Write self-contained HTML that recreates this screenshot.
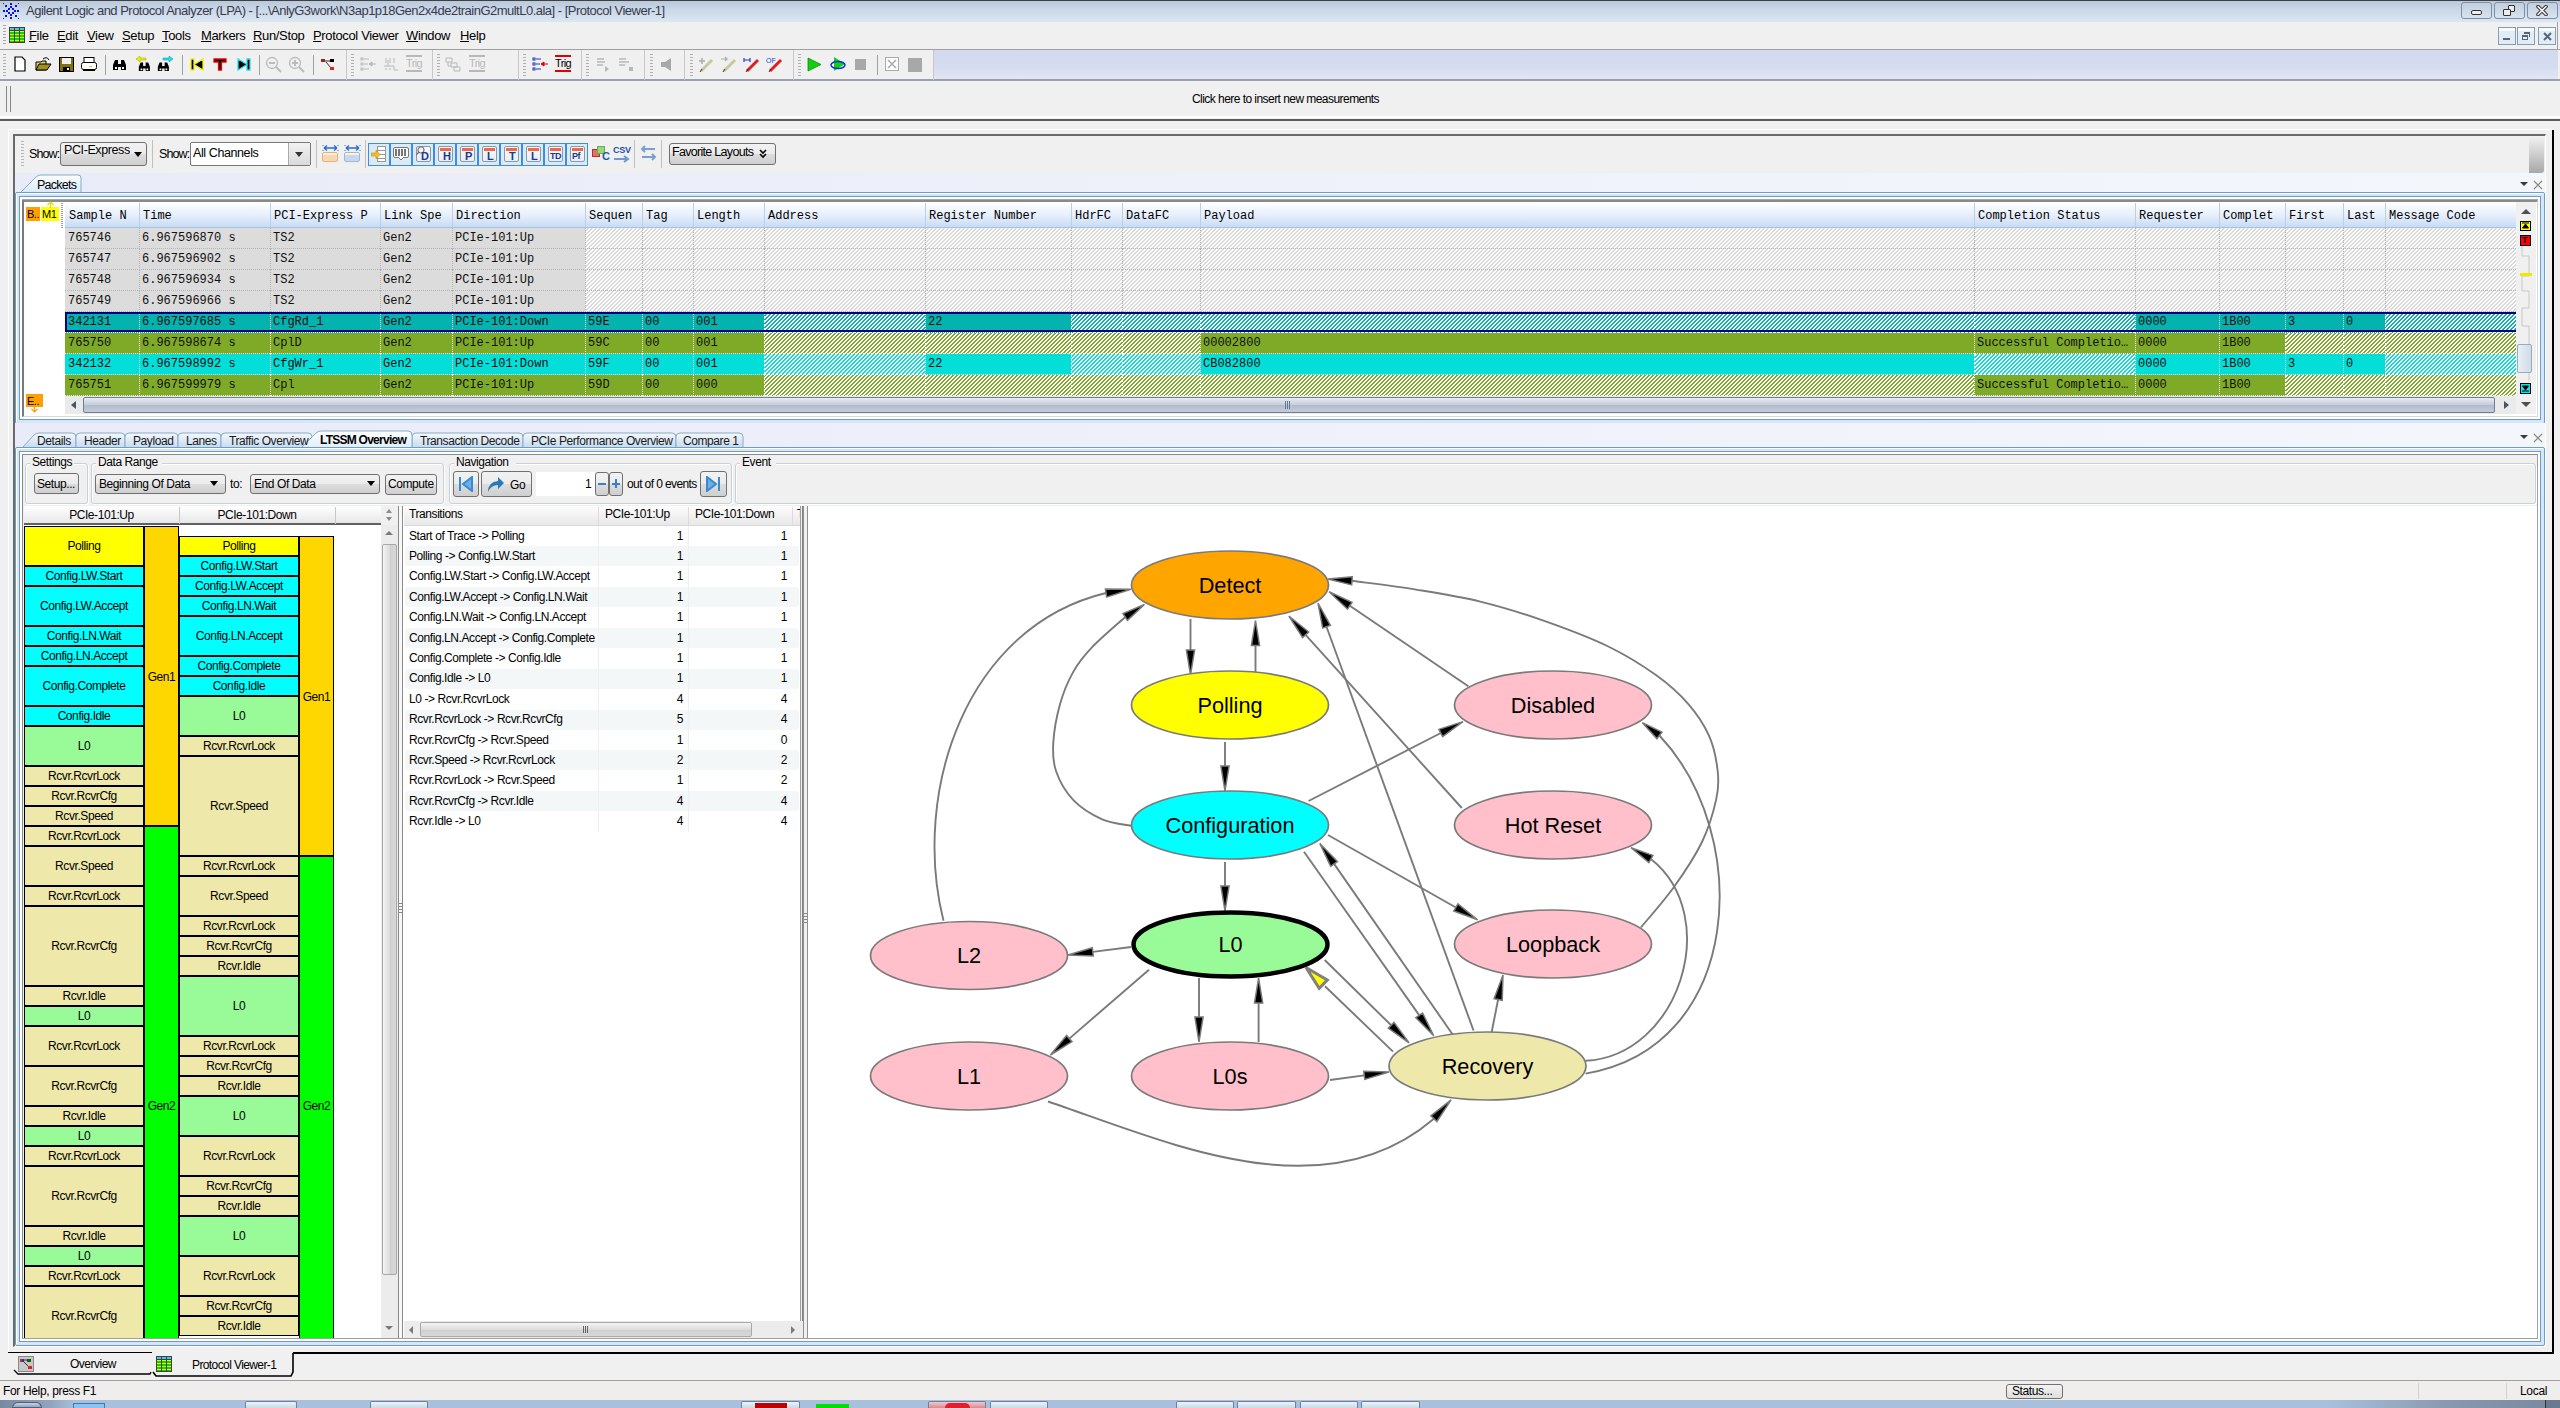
<!DOCTYPE html>
<html><head><meta charset="utf-8"><title>Agilent Logic and Protocol Analyzer</title><style>
html,body{margin:0;padding:0}
body{width:2560px;height:1408px;position:relative;overflow:hidden;background:#f0f0f0;font-family:"Liberation Sans",sans-serif;color:#000}
.t{position:absolute;white-space:nowrap;line-height:15px;font-family:"Liberation Sans",sans-serif}
</style></head>
<body>
<div style="position:absolute;left:0px;top:0px;width:2560px;height:22px;background:linear-gradient(#b9c9db,#c9d7e7 40%,#dbe6f2);border-top:1px solid #404040;box-sizing:border-box"></div>
<svg style="position:absolute;left:1px;top:1px" width="20" height="20"><g fill="#1010e0"><rect x="9" y="2" width="2" height="2"/><rect x="9" y="5" width="2" height="2"/><rect x="9" y="13" width="2" height="2"/><rect x="9" y="16" width="2" height="2"/><rect x="2" y="9" width="2" height="2"/><rect x="5" y="9" width="2" height="2"/><rect x="13" y="9" width="2" height="2"/><rect x="16" y="9" width="2" height="2"/><rect x="4" y="4" width="2" height="2"/><rect x="14" y="4" width="2" height="2"/><rect x="4" y="14" width="2" height="2"/><rect x="14" y="14" width="2" height="2"/><rect x="7" y="7" width="2" height="2"/><rect x="11" y="7" width="2" height="2"/><rect x="7" y="11" width="2" height="2"/><rect x="11" y="11" width="2" height="2"/><rect x="2" y="2" width="1" height="1"/><rect x="17" y="2" width="1" height="1"/><rect x="2" y="17" width="1" height="1"/><rect x="17" y="17" width="1" height="1"/></g></svg>
<div class="t" style="left:26px;top:3px;font-size:13px;letter-spacing:-0.51px;color:#3a3a4a">Agilent Logic and Protocol Analyzer (LPA) - [...\AnlyG3work\N3ap1p18Gen2x4de2trainG2multL0.ala] - [Protocol Viewer-1]</div>
<div style="position:absolute;left:2461px;top:2px;width:31px;height:17px;border:1px solid #7d8ea8;border-radius:3px;background:linear-gradient(#c2cfdd,#cfdbe8 60%,#d8e3ef);box-sizing:border-box"></div>
<div style="position:absolute;left:2494px;top:2px;width:31px;height:17px;border:1px solid #7d8ea8;border-radius:3px;background:linear-gradient(#c2cfdd,#cfdbe8 60%,#d8e3ef);box-sizing:border-box"></div>
<div style="position:absolute;left:2527px;top:2px;width:31px;height:17px;border:1px solid #7d8ea8;border-radius:3px;background:linear-gradient(#c2cfdd,#cfdbe8 60%,#d8e3ef);box-sizing:border-box"></div>
<div style="position:absolute;left:2471px;top:10px;width:11px;height:5px;border:1.5px solid #333;box-sizing:border-box;border-radius:2px;background:#eee"></div>
<div style="position:absolute;left:2508px;top:5px;width:7px;height:7px;border:1.5px solid #333;box-sizing:border-box;border-radius:1px;background:#eee"></div>
<div style="position:absolute;left:2503px;top:9px;width:8px;height:7px;border:1.5px solid #333;box-sizing:border-box;border-radius:1px;background:#eee"></div>
<svg style="position:absolute;left:2536px;top:5px" width="12" height="11"><path d="M2 1.5 L10 9.5 M10 1.5 L2 9.5" stroke="#333" stroke-width="3.6" stroke-linecap="round"/><path d="M2 1.5 L10 9.5 M10 1.5 L2 9.5" stroke="#f4f4f4" stroke-width="1.6" stroke-linecap="round"/></svg>
<div style="position:absolute;left:0px;top:22px;width:2560px;height:27px;background:#f0f0f0"></div>
<div style="position:absolute;left:3px;top:25px;width:3px;height:21px;background:repeating-linear-gradient(#a8a8a8 0 1px,transparent 1px 3px)"></div>
<div style="position:absolute;left:9px;top:27px;width:16px;height:16px;background:linear-gradient(90deg,transparent 0 4px,#404040 4px 5px,transparent 5px 9px,#404040 9px 10px,transparent 10px),linear-gradient(#40c8f0 0 2px,#404040 2px 3px,#f0f000 3px 4px,#10d010 4px 6px,#f0f000 6px 7px,#10d010 7px 9px,#f0f000 9px 10px,#10d010 10px 12px,#f0f000 12px 13px,#10d010 13px);border:1px solid #404040;box-sizing:border-box"></div>
<div class="t" style="left:29px;top:28px;font-size:13px;letter-spacing:-0.35px;color:#000"><u>F</u>ile</div>
<div class="t" style="left:57px;top:28px;font-size:13px;letter-spacing:-0.35px;color:#000"><u>E</u>dit</div>
<div class="t" style="left:87px;top:28px;font-size:13px;letter-spacing:-0.35px;color:#000"><u>V</u>iew</div>
<div class="t" style="left:122px;top:28px;font-size:13px;letter-spacing:-0.35px;color:#000"><u>S</u>etup</div>
<div class="t" style="left:162px;top:28px;font-size:13px;letter-spacing:-0.35px;color:#000"><u>T</u>ools</div>
<div class="t" style="left:201px;top:28px;font-size:13px;letter-spacing:-0.35px;color:#000"><u>M</u>arkers</div>
<div class="t" style="left:253px;top:28px;font-size:13px;letter-spacing:-0.35px;color:#000"><u>R</u>un/Stop</div>
<div class="t" style="left:313px;top:28px;font-size:13px;letter-spacing:-0.35px;color:#000"><u>P</u>rotocol Viewer</div>
<div class="t" style="left:406px;top:28px;font-size:13px;letter-spacing:-0.35px;color:#000"><u>W</u>indow</div>
<div class="t" style="left:460px;top:28px;font-size:13px;letter-spacing:-0.35px;color:#000"><u>H</u>elp</div>
<div style="position:absolute;left:2498px;top:27px;width:18px;height:18px;border:1px solid #8a9cb0;background:linear-gradient(#f8fbff 0 3px,#e0ecf8 3px);box-sizing:border-box"></div>
<div style="position:absolute;left:2517px;top:27px;width:18px;height:18px;border:1px solid #8a9cb0;background:linear-gradient(#f8fbff 0 3px,#e0ecf8 3px);box-sizing:border-box"></div>
<div style="position:absolute;left:2538px;top:27px;width:18px;height:18px;border:1px solid #8a9cb0;background:linear-gradient(#f8fbff 0 3px,#e0ecf8 3px);box-sizing:border-box"></div>
<div style="position:absolute;left:2503px;top:38px;width:7px;height:2px;background:#5a6470"></div>
<div style="position:absolute;left:2522px;top:35px;width:6px;height:5px;border:1px solid #5a6470;border-top-width:2px;box-sizing:border-box"></div>
<div style="position:absolute;left:2524px;top:32px;width:6px;height:5px;border-top:2px solid #5a6470;border-right:1px solid #5a6470;box-sizing:border-box"></div>
<svg style="position:absolute;left:2543px;top:32px" width="9" height="9"><path d="M1 1 L8 8 M8 1 L1 8" stroke="#5a6470" stroke-width="2"/></svg>
<div style="position:absolute;left:2557px;top:22px;width:1px;height:27px;background:#a0a0a0"></div>
<div style="position:absolute;left:0px;top:49px;width:2560px;height:32px;background:#f0f0f0;border-top:1px solid #a0a0a0;border-bottom:2px solid #9aa0a8;box-sizing:border-box"></div>
<div style="position:absolute;left:933px;top:50px;width:1625px;height:29px;background:linear-gradient(#d3d9ee,#d6dcf0 60%,#e2e6f4)"></div>
<div style="position:absolute;left:346px;top:50px;width:1px;height:30px;background:#c8c8c8"></div>
<div style="position:absolute;left:432px;top:50px;width:1px;height:30px;background:#c8c8c8"></div>
<div style="position:absolute;left:518px;top:50px;width:1px;height:30px;background:#c8c8c8"></div>
<div style="position:absolute;left:581px;top:50px;width:1px;height:30px;background:#c8c8c8"></div>
<div style="position:absolute;left:644px;top:50px;width:1px;height:30px;background:#c8c8c8"></div>
<div style="position:absolute;left:684px;top:50px;width:1px;height:30px;background:#c8c8c8"></div>
<div style="position:absolute;left:793px;top:50px;width:1px;height:30px;background:#c8c8c8"></div>
<div style="position:absolute;left:933px;top:50px;width:1px;height:30px;background:#c8c8c8"></div>
<div style="position:absolute;left:3px;top:54px;width:3px;height:22px;background:repeating-linear-gradient(#b0b0b0 0 1px,transparent 1px 3px)"></div>
<div style="position:absolute;left:351px;top:54px;width:3px;height:22px;background:repeating-linear-gradient(#b0b0b0 0 1px,transparent 1px 3px)"></div>
<div style="position:absolute;left:437px;top:54px;width:3px;height:22px;background:repeating-linear-gradient(#b0b0b0 0 1px,transparent 1px 3px)"></div>
<div style="position:absolute;left:523px;top:54px;width:3px;height:22px;background:repeating-linear-gradient(#b0b0b0 0 1px,transparent 1px 3px)"></div>
<div style="position:absolute;left:586px;top:54px;width:3px;height:22px;background:repeating-linear-gradient(#b0b0b0 0 1px,transparent 1px 3px)"></div>
<div style="position:absolute;left:650px;top:54px;width:3px;height:22px;background:repeating-linear-gradient(#b0b0b0 0 1px,transparent 1px 3px)"></div>
<div style="position:absolute;left:690px;top:54px;width:3px;height:22px;background:repeating-linear-gradient(#b0b0b0 0 1px,transparent 1px 3px)"></div>
<div style="position:absolute;left:798px;top:54px;width:3px;height:22px;background:repeating-linear-gradient(#b0b0b0 0 1px,transparent 1px 3px)"></div>
<div style="position:absolute;left:105px;top:55px;width:1px;height:20px;background:#a0a0a0"></div>
<div style="position:absolute;left:182px;top:55px;width:1px;height:20px;background:#a0a0a0"></div>
<div style="position:absolute;left:259px;top:55px;width:1px;height:20px;background:#a0a0a0"></div>
<div style="position:absolute;left:313px;top:55px;width:1px;height:20px;background:#a0a0a0"></div>
<div style="position:absolute;left:877px;top:55px;width:1px;height:20px;background:#a0a0a0"></div>
<svg style="position:absolute;left:14px;top:56px" width="12" height="16"><path d="M1 1 H8 L11 4 V15 H1 Z" fill="#fff" stroke="#000" stroke-width="1.2"/></svg>
<svg style="position:absolute;left:35px;top:56px" width="17" height="16"><path d="M1 6 H6 L7 5 H11 V14 H1 Z" fill="#e0d860" stroke="#000"/><path d="M1 14 L4 8 H16 L12 14 Z" fill="#a09020" stroke="#000"/><path d="M8 3 Q12 0 14 4" stroke="#000" fill="none"/></svg>
<svg style="position:absolute;left:59px;top:57px" width="15" height="15"><rect x="0.5" y="0.5" width="14" height="14" fill="#807010" stroke="#000"/><rect x="3" y="1" width="9" height="6" fill="#f0f0f0"/><rect x="4" y="10" width="7" height="4" fill="#000"/><rect x="8" y="11" width="2" height="2" fill="#f0f0f0"/></svg>
<svg style="position:absolute;left:81px;top:57px" width="17" height="15"><rect x="3" y="0.5" width="10" height="5" fill="#fff" stroke="#000"/><rect x="0.5" y="5.5" width="15" height="7" rx="2" fill="#fff" stroke="#000"/><rect x="2" y="12" width="12" height="2" fill="#000"/><rect x="8" y="9" width="3" height="1" fill="#e0d000"/></svg>
<svg style="position:absolute;left:112px;top:57px" width="16" height="15"><path d="M1 13 V8 L3 3 H6 V7 H9 V3 H12 L14 8 V13 H9 V10 H6 V13 Z" fill="#000"/><rect x="3" y="10" width="2" height="2" fill="#fff"/><rect x="10" y="10" width="2" height="2" fill="#fff"/></svg>
<svg style="position:absolute;left:135px;top:56px" width="17" height="17"><g transform="translate(3,4) scale(0.85)"><path d="M1 13 V8 L3 3 H6 V7 H9 V3 H12 L14 8 V13 H9 V10 H6 V13 Z" fill="#000"/><rect x="3" y="10" width="2" height="2" fill="#fff"/><rect x="10" y="10" width="2" height="2" fill="#fff"/></g><path d="M1 3 L5 0 V2 H11 V4 H5 V6 Z" fill="#f0f000" stroke="#a0a000" stroke-width="0.5"/></svg>
<svg style="position:absolute;left:157px;top:56px" width="17" height="17"><g transform="translate(0,4) scale(0.85)"><path d="M1 13 V8 L3 3 H6 V7 H9 V3 H12 L14 8 V13 H9 V10 H6 V13 Z" fill="#000"/><rect x="3" y="10" width="2" height="2" fill="#fff"/><rect x="10" y="10" width="2" height="2" fill="#fff"/></g><path d="M16 3 L12 0 V2 H6 V4 H12 V6 Z" fill="#20e0f0" stroke="#0090a0" stroke-width="0.5"/></svg>
<svg style="position:absolute;left:190px;top:58px" width="14" height="13"><path d="M1 1 H4 V12 H1 Z M4 6.5 L13 1 V12 Z" fill="#000" stroke="#f0f000" stroke-width="1.3"/></svg>
<svg style="position:absolute;left:213px;top:58px" width="14" height="13"><path d="M1 1 H13 V4 H8.5 V12 H5.5 V4 H1 Z" fill="#000" stroke="#f00000" stroke-width="1.3"/></svg>
<svg style="position:absolute;left:237px;top:58px" width="14" height="13"><path d="M13 1 H10 V12 H13 Z M10 6.5 L1 1 V12 Z" fill="#000" stroke="#20e0f0" stroke-width="1.3"/></svg>
<svg style="position:absolute;left:265px;top:56px" width="17" height="17"><circle cx="7" cy="7" r="5.5" fill="none" stroke="#bbb" stroke-width="1.3"/><path d="M4 7 H10" stroke="#bbb" stroke-width="2"/><path d="M11 11 L16 16" stroke="#bbb" stroke-width="2"/></svg>
<svg style="position:absolute;left:288px;top:56px" width="17" height="17"><circle cx="7" cy="7" r="5.5" fill="none" stroke="#bbb" stroke-width="1.3"/><path d="M4 7 H10" stroke="#bbb" stroke-width="2"/><path d="M7 4 V10" stroke="#bbb" stroke-width="2"/><path d="M11 11 L16 16" stroke="#bbb" stroke-width="2"/></svg>
<svg style="position:absolute;left:321px;top:58px" width="14" height="13"><path d="M3 3 L11 3 M5 4 L10 10" stroke="#333"/><rect x="0" y="1" width="4" height="3" fill="#a02020"/><rect x="9" y="1" width="4" height="3" fill="#000"/><rect x="9" y="9" width="4" height="3" fill="#e02020"/></svg>
<svg style="position:absolute;left:360px;top:57px" width="17" height="15"><g fill="none" stroke="#b8b8b8"><rect x="1" y="1" width="2" height="2"/><rect x="1" y="6" width="2" height="2"/><rect x="1" y="11" width="2" height="2"/><path d="M4 2 H9 M4 7 H8 M4 12 H9"/></g><path d="M9 7 H16 M9 7 L12 5 V9 Z" stroke="#b8b8b8" fill="#b8b8b8"/></svg>
<svg style="position:absolute;left:383px;top:57px" width="16" height="15"><path d="M1 9 H5 V3 M3 1 V6 M7 1 V6 M11 1 V6 M5 9 H11 V13 H15 M3 13 V11 M7 13 V11" stroke="#b8b8b8" fill="none"/></svg>
<div class="t" style="left:406px;top:58px;font-size:11px;color:#b8b8b8;letter-spacing:-0.6px;line-height:11px">Trig</div><div style="position:absolute;left:406px;top:55px;width:16px;height:2px;background:#b8b8b8"></div><div style="position:absolute;left:406px;top:70px;width:16px;height:2px;background:#b8b8b8"></div>
<svg style="position:absolute;left:445px;top:57px" width="16" height="15"><path d="M1 1 H7 V5 H1 Z M6 6 H12 V10 H6 Z M9 10 H15 V14 H9 Z M3 5 V9 H6" stroke="#b8b8b8" fill="none"/></svg>
<div class="t" style="left:469px;top:58px;font-size:11px;color:#b8b8b8;letter-spacing:-0.6px;line-height:11px">Trig</div><div style="position:absolute;left:469px;top:55px;width:16px;height:2px;background:#b8b8b8"></div><div style="position:absolute;left:469px;top:70px;width:16px;height:2px;background:#b8b8b8"></div>
<svg style="position:absolute;left:532px;top:57px" width="17" height="15"><g fill="none" stroke="#2030c0"><rect x="1" y="1" width="2" height="2"/><rect x="1" y="6" width="2" height="2"/><rect x="1" y="11" width="2" height="2"/><path d="M4 2 H9 M4 7 H8 M4 12 H9"/></g><path d="M9 7 H16 M9 7 L12 5 V9 Z" stroke="#e00000" fill="#e00000"/></svg>
<div class="t" style="left:555px;top:58px;font-size:11px;color:#000;letter-spacing:-0.6px;line-height:11px">Trig</div><div style="position:absolute;left:555px;top:55px;width:16px;height:2px;background:#e00000"></div><div style="position:absolute;left:555px;top:70px;width:16px;height:2px;background:#e00000"></div>
<svg style="position:absolute;left:596px;top:57px" width="14" height="15"><path d="M1 2 H8 M1 5 H9 M1 8 H7" stroke="#b8b8b8" stroke-width="1.5"/><path d="M9 9 L13 12 L9 15 Z" fill="#b8b8b8"/></svg>
<svg style="position:absolute;left:618px;top:57px" width="16" height="15"><path d="M1 2 H8 M1 5 H11 M1 8 H7" stroke="#b8b8b8" stroke-width="1.5"/><rect x="11" y="10" width="4" height="4" fill="#b8b8b8"/></svg>
<svg style="position:absolute;left:659px;top:57px" width="16" height="15"><path d="M2 5 H6 L12 1 V14 L6 10 H2 Z" fill="#a8a8a8"/></svg>
<svg style="position:absolute;left:697px;top:56px" width="18" height="17"><path d="M4 15 L15 4" stroke="#c8c8a0" stroke-width="3"/><path d="M3 16 L5 13" stroke="#333" stroke-width="1"/><path d="M2 5 H8 M5 2 V8" stroke="#aaa" stroke-width="1.5"/></svg>
<svg style="position:absolute;left:720px;top:56px" width="18" height="17"><path d="M4 15 L15 4" stroke="#c8c8a0" stroke-width="3"/><path d="M3 16 L5 13" stroke="#333" stroke-width="1"/><path d="M1 3 H7 L5 1 M7 3 L5 5" stroke="#aaa" stroke-width="1.2" fill="none"/></svg>
<svg style="position:absolute;left:743px;top:56px" width="18" height="17"><path d="M4 15 L15 4" stroke="#e02020" stroke-width="3"/><path d="M3 16 L5 13" stroke="#333" stroke-width="1"/><path d="M1 2 V6 M7 2 V6 M1 4 H7" stroke="#2040d0" stroke-width="1.2"/></svg>
<svg style="position:absolute;left:766px;top:56px" width="18" height="17"><path d="M4 15 L15 4" stroke="#e02020" stroke-width="3"/><path d="M3 16 L5 13" stroke="#333" stroke-width="1"/><text x="0" y="7" font-size="7" fill="#2040d0" font-family="Liberation Sans">OF</text></svg>
<svg style="position:absolute;left:807px;top:57px" width="16" height="15"><path d="M1 1 L14 7.5 L1 14 Z" fill="#10d010" stroke="#008000" stroke-width="0.7"/></svg>
<svg style="position:absolute;left:830px;top:56px" width="17" height="16"><path d="M4 1 L15 8 L4 15 Z" fill="#10d010"/><ellipse cx="8" cy="9" rx="7" ry="3.5" fill="none" stroke="#1030e0" stroke-width="1.5"/></svg>
<div style="position:absolute;left:855px;top:59px;width:11px;height:11px;background:#a8a8a8"></div>
<svg style="position:absolute;left:885px;top:57px" width="15" height="15"><rect x="0.5" y="0.5" width="13" height="13" fill="#fff" stroke="#aaa"/><path d="M3 3 L11 11 M11 3 L3 11" stroke="#aaa" stroke-width="1.5"/></svg>
<div style="position:absolute;left:908px;top:58px;width:14px;height:14px;background:#a8a8a8"></div>
<div style="position:absolute;left:0px;top:81px;width:2560px;height:35px;background:#f0f0f0"></div>
<div style="position:absolute;left:6px;top:86px;width:2px;height:26px;border-left:1px solid #888;border-right:1px solid #888;width:5px;box-sizing:border-box"></div>
<div class="t" style="left:1192px;top:92px;font-size:12px;letter-spacing:-0.55px;color:#000">Click here to insert new measurements</div>
<div style="position:absolute;left:0px;top:116px;width:2560px;height:2px;background:#fff"></div>
<div style="position:absolute;left:0px;top:119px;width:2560px;height:2px;background:#5a5a5a"></div>
<div style="position:absolute;left:8px;top:129px;width:2545px;height:1225px;background:#f0f0f0;border-top:1px solid #fff;border-left:1px solid #fff;box-sizing:border-box"></div>
<div style="position:absolute;left:2552px;top:130px;width:2px;height:1224px;background:#000"></div>
<div style="position:absolute;left:13px;top:134px;width:2533px;height:1213px;border-top:2px solid #6a6a6a;border-left:2px solid #6a6a6a;border-right:1px solid #fff;border-bottom:1px solid #fff;box-sizing:border-box"></div>
<div style="position:absolute;left:21px;top:141px;width:3px;height:26px;background:repeating-linear-gradient(#b8b8b8 0 1.5px,transparent 1.5px 3px)"></div>
<div style="position:absolute;left:60px;top:142px;width:87px;height:24px;border:1px solid #707070;border-radius:3px;background:linear-gradient(#f2f2f2,#ebebeb 50%,#dcdcdc 51%,#cfcfcf);box-sizing:border-box"></div>
<div class="t" style="left:64px;top:143px;font-size:12.5px;letter-spacing:-0.4px">PCI-Express</div>
<svg style="position:absolute;left:134px;top:152px" width="9" height="6"><path d="M0 0 H8 L4 5 Z" fill="#000"/></svg>
<div style="position:absolute;left:152px;top:140px;width:1px;height:28px;background:#c0c0c0"></div>
<div class="t" style="left:29px;top:147px;font-size:12.5px;letter-spacing:-0.9px">Show:</div>
<div class="t" style="left:159px;top:147px;font-size:12.5px;letter-spacing:-0.9px">Show:</div>
<div style="position:absolute;left:190px;top:142px;width:121px;height:24px;border:1px solid #7a7a7a;border-radius:2px;background:#fff;box-sizing:border-box"></div>
<div style="position:absolute;left:288px;top:143px;width:22px;height:22px;background:linear-gradient(#f2f2f2,#dadada);border-left:1px solid #aaa;box-sizing:border-box"></div>
<svg style="position:absolute;left:295px;top:152px" width="9" height="6"><path d="M0 0 H8 L4 5 Z" fill="#333"/></svg>
<div class="t" style="left:193px;top:146px;font-size:12.5px;letter-spacing:-0.4px">All Channels</div>
<div style="position:absolute;left:316px;top:140px;width:1px;height:28px;background:#c0c0c0"></div>
<div style="position:absolute;left:365px;top:140px;width:1px;height:28px;background:#c0c0c0"></div>
<div style="position:absolute;left:634px;top:140px;width:1px;height:28px;background:#c0c0c0"></div>
<div style="position:absolute;left:661px;top:140px;width:1px;height:28px;background:#c0c0c0"></div>
<div style="position:absolute;left:322px;top:152px;width:16px;height:10px;background:linear-gradient(#fff0e0 0 2px,#f8d8b0 2px);border:1px solid #e8b080;border-radius:2px;box-sizing:border-box"></div>
<svg style="position:absolute;left:322px;top:144px" width="17" height="8"><path d="M1 1 V2 M16 1 V2 M1 6 V7 M16 6 V7" stroke="#2a6ad0"/><path d="M2 4 H15 M2 4 L5 1.5 M2 4 L5 6.5 M15 4 L12 1.5 M15 4 L12 6.5" stroke="#2a6ad0" stroke-width="1.3" fill="none"/></svg>
<div style="position:absolute;left:344px;top:152px;width:16px;height:10px;background:linear-gradient(#fff0e0 0 2px,#c8d8f0 2px);border:1px solid #a0b8d8;border-radius:2px;box-sizing:border-box"></div>
<svg style="position:absolute;left:344px;top:144px" width="17" height="8"><path d="M1 1 V2 M16 1 V2 M1 6 V7 M16 6 V7" stroke="#2a6ad0"/><path d="M2 4 H15 M2 4 L5 1.5 M2 4 L5 6.5 M15 4 L12 1.5 M15 4 L12 6.5" stroke="#2a6ad0" stroke-width="1.3" fill="none"/></svg>
<div style="position:absolute;left:368px;top:143px;width:22px;height:23px;border:1px solid #3b8ee8;background:#dceaf8;box-sizing:border-box"></div>
<div style="position:absolute;left:377px;top:146px;width:9px;height:16px;background:repeating-linear-gradient(#fff 0 3px,#999 3px 4px);border:1px solid #999;box-sizing:border-box"></div>
<svg style="position:absolute;left:371px;top:150px" width="10" height="9"><path d="M0 3 H5 V0 L9 4.5 L5 9 V6 H0 Z" fill="#f0c020" stroke="#c09010" stroke-width="0.6"/></svg>
<div style="position:absolute;left:390px;top:143px;width:22px;height:23px;border:1px solid #3b8ee8;background:#dceaf8;box-sizing:border-box"></div>
<div style="position:absolute;left:393px;top:147px;width:16px;height:11px;background:#fafafa;border:1px solid #777;border-radius:2px;box-sizing:border-box"></div>
<div style="position:absolute;left:395px;top:149px;width:12px;height:7px;background:repeating-linear-gradient(90deg,#555 0 2px,transparent 2px 3px);opacity:0.8"></div>
<svg style="position:absolute;left:398px;top:157px" width="6" height="4"><path d="M0 0 L3 3 L6 0" fill="#fafafa" stroke="#777"/></svg>
<div style="position:absolute;left:412px;top:143px;width:22px;height:23px;border:1px solid #3b8ee8;background:#dceaf8;box-sizing:border-box"></div>
<div style="position:absolute;left:416px;top:146px;width:15px;height:16px;border:1px solid #8a9aa8;border-radius:2px;background:linear-gradient(#fafafa,#e8eef4);box-sizing:border-box"></div>
<svg style="position:absolute;left:416px;top:146px" width="10" height="10"><circle cx="5" cy="4" r="3" fill="none" stroke="#777" stroke-width="1.2"/><path d="M3 6 L0 9" stroke="#777" stroke-width="1.5"/></svg>
<div class="t" style="left:421px;top:151px;font-size:11px;font-weight:bold;color:#1a3a90;line-height:11px;letter-spacing:-0.6px">D</div>
<div style="position:absolute;left:434px;top:143px;width:22px;height:23px;border:1px solid #3b8ee8;background:#dceaf8;box-sizing:border-box"></div>
<div style="position:absolute;left:438px;top:146px;width:15px;height:16px;border:1px solid #8a9aa8;border-radius:2px;background:linear-gradient(#fafafa,#e8eef4);box-sizing:border-box"></div>
<div style="position:absolute;left:440px;top:148px;width:11px;height:3px;background:#f06848"></div>
<div class="t" style="left:443px;top:151px;font-size:11px;font-weight:bold;color:#1a3a90;line-height:11px;letter-spacing:-0.6px">H</div>
<div style="position:absolute;left:456px;top:143px;width:22px;height:23px;border:1px solid #3b8ee8;background:#dceaf8;box-sizing:border-box"></div>
<div style="position:absolute;left:460px;top:146px;width:15px;height:16px;border:1px solid #8a9aa8;border-radius:2px;background:linear-gradient(#fafafa,#e8eef4);box-sizing:border-box"></div>
<div style="position:absolute;left:462px;top:148px;width:11px;height:3px;background:#f06848"></div>
<div class="t" style="left:465px;top:151px;font-size:11px;font-weight:bold;color:#1a3a90;line-height:11px;letter-spacing:-0.6px">P</div>
<div style="position:absolute;left:478px;top:143px;width:22px;height:23px;border:1px solid #3b8ee8;background:#dceaf8;box-sizing:border-box"></div>
<div style="position:absolute;left:482px;top:146px;width:15px;height:16px;border:1px solid #8a9aa8;border-radius:2px;background:linear-gradient(#fafafa,#e8eef4);box-sizing:border-box"></div>
<div style="position:absolute;left:484px;top:148px;width:11px;height:3px;background:#f06848"></div>
<div class="t" style="left:487px;top:151px;font-size:11px;font-weight:bold;color:#1a3a90;line-height:11px;letter-spacing:-0.6px">L</div>
<div style="position:absolute;left:500px;top:143px;width:22px;height:23px;border:1px solid #3b8ee8;background:#dceaf8;box-sizing:border-box"></div>
<div style="position:absolute;left:504px;top:146px;width:15px;height:16px;border:1px solid #8a9aa8;border-radius:2px;background:linear-gradient(#fafafa,#e8eef4);box-sizing:border-box"></div>
<div style="position:absolute;left:506px;top:148px;width:11px;height:3px;background:#f06848"></div>
<div class="t" style="left:509px;top:151px;font-size:11px;font-weight:bold;color:#1a3a90;line-height:11px;letter-spacing:-0.6px">T</div>
<div style="position:absolute;left:522px;top:143px;width:22px;height:23px;border:1px solid #3b8ee8;background:#dceaf8;box-sizing:border-box"></div>
<div style="position:absolute;left:526px;top:146px;width:15px;height:16px;border:1px solid #8a9aa8;border-radius:2px;background:linear-gradient(#fafafa,#e8eef4);box-sizing:border-box"></div>
<div style="position:absolute;left:528px;top:148px;width:11px;height:3px;background:#f06848"></div>
<div class="t" style="left:531px;top:151px;font-size:11px;font-weight:bold;color:#1a3a90;line-height:11px;letter-spacing:-0.6px">L</div>
<div style="position:absolute;left:544px;top:143px;width:22px;height:23px;border:1px solid #3b8ee8;background:#dceaf8;box-sizing:border-box"></div>
<div style="position:absolute;left:548px;top:146px;width:15px;height:16px;border:1px solid #8a9aa8;border-radius:2px;background:linear-gradient(#fafafa,#e8eef4);box-sizing:border-box"></div>
<div style="position:absolute;left:550px;top:148px;width:11px;height:3px;background:#f06848"></div>
<div class="t" style="left:550px;top:151px;font-size:9px;font-weight:bold;color:#1a3a90;line-height:11px;letter-spacing:-0.6px">TD</div>
<div style="position:absolute;left:566px;top:143px;width:22px;height:23px;border:1px solid #3b8ee8;background:#dceaf8;box-sizing:border-box"></div>
<div style="position:absolute;left:570px;top:146px;width:15px;height:16px;border:1px solid #8a9aa8;border-radius:2px;background:linear-gradient(#fafafa,#e8eef4);box-sizing:border-box"></div>
<div style="position:absolute;left:572px;top:148px;width:11px;height:3px;background:#f06848"></div>
<div class="t" style="left:572px;top:151px;font-size:9px;font-weight:bold;color:#1a3a90;line-height:11px;letter-spacing:-0.6px">Pf</div>
<div style="position:absolute;left:592px;top:149px;width:8px;height:8px;background:#e87060;border:1px solid #a33;box-sizing:border-box"></div>
<div style="position:absolute;left:597px;top:146px;width:8px;height:8px;background:#9ad870;border:1px solid #6a6;box-sizing:border-box"></div>
<div class="t" style="left:602px;top:151px;font-size:11px;font-weight:bold;color:#1a5ab0;line-height:11px">C</div>
<div class="t" style="left:613px;top:145px;font-size:9px;font-weight:bold;color:#2050b0;line-height:10px;letter-spacing:-0.3px">CSV</div>
<svg style="position:absolute;left:613px;top:155px" width="18" height="8"><path d="M1 4 H15 M11 1 L15 4 L11 7" stroke="#6a9ad0" stroke-width="2" fill="none"/></svg>
<svg style="position:absolute;left:640px;top:145px" width="17" height="17"><path d="M15 4 H2 M5 1 L2 4 L5 7 M2 12 H15 M12 9 L15 12 L12 15" stroke="#7aa0d0" stroke-width="2" fill="none"/></svg>
<div style="position:absolute;left:669px;top:143px;width:107px;height:22px;border:1px solid #707070;border-radius:3px;background:linear-gradient(#f2f2f2,#ebebeb 50%,#dcdcdc 51%,#cfcfcf);box-sizing:border-box"></div>
<div class="t" style="left:672px;top:145px;font-size:12.5px;letter-spacing:-0.7px">Favorite Layouts</div>
<svg style="position:absolute;left:759px;top:149px" width="9" height="11"><path d="M1 1 L4 4 L7 1 M1 5 L4 8 L7 5" stroke="#000" stroke-width="1.6" fill="none"/></svg>
<div style="position:absolute;left:2529px;top:137px;width:15px;height:36px;background:linear-gradient(#f0f0f0,#a8a8a8);border-radius:0 0 3px 0"></div>
<div style="position:absolute;left:15px;top:173px;width:2530px;height:20px;background:linear-gradient(90deg,#e9ecf8,#f3f6fb)"></div>
<svg style="position:absolute;left:19px;top:174px" width="64" height="20"><path d="M1 19 L17 3 Q19 1 22 1 H59 Q62 1 62 4 V19" fill="url(#tabg)" stroke="#86abc9"/><defs><linearGradient id="tabg" x1="0" y1="0" x2="0" y2="1"><stop offset="0" stop-color="#fdfeff"/><stop offset="1" stop-color="#d8e8f8"/></linearGradient></defs></svg>
<div class="t" style="left:37px;top:178px;font-size:12.5px;letter-spacing:-0.75px">Packets</div>
<svg style="position:absolute;left:2519px;top:180px" width="26" height="10"><path d="M1 2 H9 L5 6 Z" fill="#333c44"/><path d="M15 1 L23 9 M23 1 L15 9" stroke="#8a8a80" stroke-width="1.2"/></svg>
<div style="position:absolute;left:15px;top:192px;width:2530px;height:232px;border:1px solid #6a9ec2;border-radius:2px;background:#d6e6f8;box-shadow:inset 1px 1px 0 #fff;box-sizing:border-box"></div>
<div style="position:absolute;left:19px;top:196px;width:2522px;height:224px;border:1px solid #6a9ec2;background:#fff;box-sizing:border-box"></div>
<div style="position:absolute;left:22px;top:199px;width:2516px;height:218px;border-top:3px solid #8a8a8a;border-left:2px solid #7a7a7a;border-right:1px solid #d8d8d8;border-bottom:1px solid #d8d8d8;box-sizing:border-box;background:#fff"></div>
<div style="position:absolute;left:22px;top:199px;width:2516px;height:1px;background:#a8a8a8"></div>
<div style="position:absolute;left:24px;top:202px;width:41px;height:212px;background:#fff"></div>
<div style="position:absolute;left:26px;top:207px;width:14px;height:14px;background:#ffa000"></div>
<div class="t" style="left:27px;top:208px;font-size:11px;line-height:12px;letter-spacing:-0.5px">B..</div>
<div style="position:absolute;left:41px;top:207px;width:18px;height:14px;background:#ffff00"></div>
<div class="t" style="left:42px;top:208px;font-size:11px;line-height:12px;letter-spacing:-0.5px">M1</div>
<svg style="position:absolute;left:46px;top:201px" width="9" height="7"><path d="M4.5 1 V7 M1.5 4 L4.5 1 L7.5 4" stroke="#e8d800" stroke-width="1.2" fill="none"/></svg>
<div style="position:absolute;left:61px;top:203px;width:2px;height:25px;background:repeating-linear-gradient(#a0a0a0 0 1px,transparent 1px 2px)"></div>
<div style="position:absolute;left:26px;top:394px;width:17px;height:13px;background:#ffa000"></div>
<div class="t" style="left:27px;top:395px;font-size:11px;line-height:12px;letter-spacing:-0.5px">E..</div>
<svg style="position:absolute;left:30px;top:406px" width="9" height="8"><path d="M4.5 0 V6 M1.5 3 L4.5 6 L7.5 3" stroke="#ffa000" stroke-width="1.2" fill="none"/></svg>
<div style="position:absolute;left:65px;top:202px;width:2451px;height:26px;background:linear-gradient(#ffffff,#e8f0fb 50%,#c8dcf6);border-bottom:1px solid #a8c4e4;box-sizing:border-box"></div>
<div class="t" style="left:69px;top:209px;font-family:'Liberation Mono',monospace;font-size:12px;letter-spacing:0px">Sample N</div>
<div style="position:absolute;left:139px;top:203px;width:1px;height:24px;background:#b8d0ea"></div>
<div class="t" style="left:143px;top:209px;font-family:'Liberation Mono',monospace;font-size:12px;letter-spacing:0px">Time</div>
<div style="position:absolute;left:270px;top:203px;width:1px;height:24px;background:#b8d0ea"></div>
<div class="t" style="left:274px;top:209px;font-family:'Liberation Mono',monospace;font-size:12px;letter-spacing:0px">PCI-Express P</div>
<div style="position:absolute;left:380px;top:203px;width:1px;height:24px;background:#b8d0ea"></div>
<div class="t" style="left:384px;top:209px;font-family:'Liberation Mono',monospace;font-size:12px;letter-spacing:0px">Link Spe</div>
<div style="position:absolute;left:452px;top:203px;width:1px;height:24px;background:#b8d0ea"></div>
<div class="t" style="left:456px;top:209px;font-family:'Liberation Mono',monospace;font-size:12px;letter-spacing:0px">Direction</div>
<div style="position:absolute;left:585px;top:203px;width:1px;height:24px;background:#b8d0ea"></div>
<div class="t" style="left:589px;top:209px;font-family:'Liberation Mono',monospace;font-size:12px;letter-spacing:0px">Sequen</div>
<div style="position:absolute;left:642px;top:203px;width:1px;height:24px;background:#b8d0ea"></div>
<div class="t" style="left:646px;top:209px;font-family:'Liberation Mono',monospace;font-size:12px;letter-spacing:0px">Tag</div>
<div style="position:absolute;left:693px;top:203px;width:1px;height:24px;background:#b8d0ea"></div>
<div class="t" style="left:697px;top:209px;font-family:'Liberation Mono',monospace;font-size:12px;letter-spacing:0px">Length</div>
<div style="position:absolute;left:764px;top:203px;width:1px;height:24px;background:#b8d0ea"></div>
<div class="t" style="left:768px;top:209px;font-family:'Liberation Mono',monospace;font-size:12px;letter-spacing:0px">Address</div>
<div style="position:absolute;left:925px;top:203px;width:1px;height:24px;background:#b8d0ea"></div>
<div class="t" style="left:929px;top:209px;font-family:'Liberation Mono',monospace;font-size:12px;letter-spacing:0px">Register Number</div>
<div style="position:absolute;left:1071px;top:203px;width:1px;height:24px;background:#b8d0ea"></div>
<div class="t" style="left:1075px;top:209px;font-family:'Liberation Mono',monospace;font-size:12px;letter-spacing:0px">HdrFC</div>
<div style="position:absolute;left:1122px;top:203px;width:1px;height:24px;background:#b8d0ea"></div>
<div class="t" style="left:1126px;top:209px;font-family:'Liberation Mono',monospace;font-size:12px;letter-spacing:0px">DataFC</div>
<div style="position:absolute;left:1200px;top:203px;width:1px;height:24px;background:#b8d0ea"></div>
<div class="t" style="left:1204px;top:209px;font-family:'Liberation Mono',monospace;font-size:12px;letter-spacing:0px">Payload</div>
<div style="position:absolute;left:1974px;top:203px;width:1px;height:24px;background:#b8d0ea"></div>
<div class="t" style="left:1978px;top:209px;font-family:'Liberation Mono',monospace;font-size:12px;letter-spacing:0px">Completion Status</div>
<div style="position:absolute;left:2135px;top:203px;width:1px;height:24px;background:#b8d0ea"></div>
<div class="t" style="left:2139px;top:209px;font-family:'Liberation Mono',monospace;font-size:12px;letter-spacing:0px">Requester</div>
<div style="position:absolute;left:2219px;top:203px;width:1px;height:24px;background:#b8d0ea"></div>
<div class="t" style="left:2223px;top:209px;font-family:'Liberation Mono',monospace;font-size:12px;letter-spacing:0px">Complet</div>
<div style="position:absolute;left:2285px;top:203px;width:1px;height:24px;background:#b8d0ea"></div>
<div class="t" style="left:2289px;top:209px;font-family:'Liberation Mono',monospace;font-size:12px;letter-spacing:0px">First</div>
<div style="position:absolute;left:2343px;top:203px;width:1px;height:24px;background:#b8d0ea"></div>
<div class="t" style="left:2347px;top:209px;font-family:'Liberation Mono',monospace;font-size:12px;letter-spacing:0px">Last</div>
<div style="position:absolute;left:2385px;top:203px;width:1px;height:24px;background:#b8d0ea"></div>
<div class="t" style="left:2389px;top:209px;font-family:'Liberation Mono',monospace;font-size:12px;letter-spacing:0px">Message Code</div>
<div style="position:absolute;left:2516px;top:202px;width:1px;height:26px;background:#b8d0ea"></div>
<div style="position:absolute;left:65px;top:228px;width:74px;height:21px;background:#dcdcdc"></div>
<div style="position:absolute;left:139px;top:228px;width:131px;height:21px;background:#dcdcdc"></div>
<div style="position:absolute;left:270px;top:228px;width:110px;height:21px;background:#dcdcdc"></div>
<div style="position:absolute;left:380px;top:228px;width:72px;height:21px;background:#dcdcdc"></div>
<div style="position:absolute;left:452px;top:228px;width:133px;height:21px;background:#dcdcdc"></div>
<div style="position:absolute;left:65px;top:249px;width:74px;height:21px;background:#dcdcdc"></div>
<div style="position:absolute;left:139px;top:249px;width:131px;height:21px;background:#dcdcdc"></div>
<div style="position:absolute;left:270px;top:249px;width:110px;height:21px;background:#dcdcdc"></div>
<div style="position:absolute;left:380px;top:249px;width:72px;height:21px;background:#dcdcdc"></div>
<div style="position:absolute;left:452px;top:249px;width:133px;height:21px;background:#dcdcdc"></div>
<div style="position:absolute;left:65px;top:270px;width:74px;height:21px;background:#dcdcdc"></div>
<div style="position:absolute;left:139px;top:270px;width:131px;height:21px;background:#dcdcdc"></div>
<div style="position:absolute;left:270px;top:270px;width:110px;height:21px;background:#dcdcdc"></div>
<div style="position:absolute;left:380px;top:270px;width:72px;height:21px;background:#dcdcdc"></div>
<div style="position:absolute;left:452px;top:270px;width:133px;height:21px;background:#dcdcdc"></div>
<div style="position:absolute;left:65px;top:291px;width:74px;height:21px;background:#dcdcdc"></div>
<div style="position:absolute;left:139px;top:291px;width:131px;height:21px;background:#dcdcdc"></div>
<div style="position:absolute;left:270px;top:291px;width:110px;height:21px;background:#dcdcdc"></div>
<div style="position:absolute;left:380px;top:291px;width:72px;height:21px;background:#dcdcdc"></div>
<div style="position:absolute;left:452px;top:291px;width:133px;height:21px;background:#dcdcdc"></div>
<div style="position:absolute;left:65px;top:312px;width:74px;height:21px;background:#04b2ae"></div>
<div style="position:absolute;left:139px;top:312px;width:131px;height:21px;background:#04b2ae"></div>
<div style="position:absolute;left:270px;top:312px;width:110px;height:21px;background:#04b2ae"></div>
<div style="position:absolute;left:380px;top:312px;width:72px;height:21px;background:#04b2ae"></div>
<div style="position:absolute;left:452px;top:312px;width:133px;height:21px;background:#04b2ae"></div>
<div style="position:absolute;left:585px;top:312px;width:57px;height:21px;background:#04b2ae"></div>
<div style="position:absolute;left:642px;top:312px;width:51px;height:21px;background:#04b2ae"></div>
<div style="position:absolute;left:693px;top:312px;width:71px;height:21px;background:#04b2ae"></div>
<div style="position:absolute;left:925px;top:312px;width:146px;height:21px;background:#04b2ae"></div>
<div style="position:absolute;left:2135px;top:312px;width:84px;height:21px;background:#04b2ae"></div>
<div style="position:absolute;left:2219px;top:312px;width:66px;height:21px;background:#04b2ae"></div>
<div style="position:absolute;left:2285px;top:312px;width:58px;height:21px;background:#04b2ae"></div>
<div style="position:absolute;left:2343px;top:312px;width:42px;height:21px;background:#04b2ae"></div>
<div style="position:absolute;left:65px;top:333px;width:74px;height:21px;background:#7eaa28"></div>
<div style="position:absolute;left:139px;top:333px;width:131px;height:21px;background:#7eaa28"></div>
<div style="position:absolute;left:270px;top:333px;width:110px;height:21px;background:#7eaa28"></div>
<div style="position:absolute;left:380px;top:333px;width:72px;height:21px;background:#7eaa28"></div>
<div style="position:absolute;left:452px;top:333px;width:133px;height:21px;background:#7eaa28"></div>
<div style="position:absolute;left:585px;top:333px;width:57px;height:21px;background:#7eaa28"></div>
<div style="position:absolute;left:642px;top:333px;width:51px;height:21px;background:#7eaa28"></div>
<div style="position:absolute;left:693px;top:333px;width:71px;height:21px;background:#7eaa28"></div>
<div style="position:absolute;left:1200px;top:333px;width:774px;height:21px;background:#7eaa28"></div>
<div style="position:absolute;left:1974px;top:333px;width:161px;height:21px;background:#7eaa28"></div>
<div style="position:absolute;left:2135px;top:333px;width:84px;height:21px;background:#7eaa28"></div>
<div style="position:absolute;left:2219px;top:333px;width:66px;height:21px;background:#7eaa28"></div>
<div style="position:absolute;left:65px;top:354px;width:74px;height:21px;background:#04ded8"></div>
<div style="position:absolute;left:139px;top:354px;width:131px;height:21px;background:#04ded8"></div>
<div style="position:absolute;left:270px;top:354px;width:110px;height:21px;background:#04ded8"></div>
<div style="position:absolute;left:380px;top:354px;width:72px;height:21px;background:#04ded8"></div>
<div style="position:absolute;left:452px;top:354px;width:133px;height:21px;background:#04ded8"></div>
<div style="position:absolute;left:585px;top:354px;width:57px;height:21px;background:#04ded8"></div>
<div style="position:absolute;left:642px;top:354px;width:51px;height:21px;background:#04ded8"></div>
<div style="position:absolute;left:693px;top:354px;width:71px;height:21px;background:#04ded8"></div>
<div style="position:absolute;left:925px;top:354px;width:146px;height:21px;background:#04ded8"></div>
<div style="position:absolute;left:1200px;top:354px;width:774px;height:21px;background:#04ded8"></div>
<div style="position:absolute;left:2135px;top:354px;width:84px;height:21px;background:#04ded8"></div>
<div style="position:absolute;left:2219px;top:354px;width:66px;height:21px;background:#04ded8"></div>
<div style="position:absolute;left:2285px;top:354px;width:58px;height:21px;background:#04ded8"></div>
<div style="position:absolute;left:2343px;top:354px;width:42px;height:21px;background:#04ded8"></div>
<div style="position:absolute;left:65px;top:375px;width:74px;height:21px;background:#7eaa28"></div>
<div style="position:absolute;left:139px;top:375px;width:131px;height:21px;background:#7eaa28"></div>
<div style="position:absolute;left:270px;top:375px;width:110px;height:21px;background:#7eaa28"></div>
<div style="position:absolute;left:380px;top:375px;width:72px;height:21px;background:#7eaa28"></div>
<div style="position:absolute;left:452px;top:375px;width:133px;height:21px;background:#7eaa28"></div>
<div style="position:absolute;left:585px;top:375px;width:57px;height:21px;background:#7eaa28"></div>
<div style="position:absolute;left:642px;top:375px;width:51px;height:21px;background:#7eaa28"></div>
<div style="position:absolute;left:693px;top:375px;width:71px;height:21px;background:#7eaa28"></div>
<div style="position:absolute;left:1974px;top:375px;width:161px;height:21px;background:#7eaa28"></div>
<div style="position:absolute;left:2135px;top:375px;width:84px;height:21px;background:#7eaa28"></div>
<div style="position:absolute;left:2219px;top:375px;width:66px;height:21px;background:#7eaa28"></div>
<svg style="position:absolute;left:0;top:0" width="2560" height="420" shape-rendering="crispEdges"><defs><pattern id="hgray" width="4" height="4" patternUnits="userSpaceOnUse"><rect width="4" height="4" fill="#ffffff"/><rect x="3" y="0" width="1" height="1" fill="#d9d9d9"/><rect x="0" y="0" width="1" height="1" fill="#d9d9d9"/><rect x="2" y="1" width="1" height="1" fill="#d9d9d9"/><rect x="3" y="1" width="1" height="1" fill="#d9d9d9"/><rect x="1" y="2" width="1" height="1" fill="#d9d9d9"/><rect x="2" y="2" width="1" height="1" fill="#d9d9d9"/><rect x="0" y="3" width="1" height="1" fill="#d9d9d9"/><rect x="1" y="3" width="1" height="1" fill="#d9d9d9"/></pattern><pattern id="hteal" width="4" height="4" patternUnits="userSpaceOnUse"><rect width="4" height="4" fill="#ffffff"/><rect x="3" y="0" width="1" height="1" fill="#04b2ae"/><rect x="0" y="0" width="1" height="1" fill="#04b2ae"/><rect x="2" y="1" width="1" height="1" fill="#04b2ae"/><rect x="3" y="1" width="1" height="1" fill="#04b2ae"/><rect x="1" y="2" width="1" height="1" fill="#04b2ae"/><rect x="2" y="2" width="1" height="1" fill="#04b2ae"/><rect x="0" y="3" width="1" height="1" fill="#04b2ae"/><rect x="1" y="3" width="1" height="1" fill="#04b2ae"/></pattern><pattern id="holive" width="4" height="4" patternUnits="userSpaceOnUse"><rect width="4" height="4" fill="#ffffff"/><rect x="3" y="0" width="1" height="1" fill="#7eaa28"/><rect x="0" y="0" width="1" height="1" fill="#7eaa28"/><rect x="2" y="1" width="1" height="1" fill="#7eaa28"/><rect x="3" y="1" width="1" height="1" fill="#7eaa28"/><rect x="1" y="2" width="1" height="1" fill="#7eaa28"/><rect x="2" y="2" width="1" height="1" fill="#7eaa28"/><rect x="0" y="3" width="1" height="1" fill="#7eaa28"/><rect x="1" y="3" width="1" height="1" fill="#7eaa28"/></pattern><pattern id="hcyan" width="4" height="4" patternUnits="userSpaceOnUse"><rect width="4" height="4" fill="#ffffff"/><rect x="3" y="0" width="1" height="1" fill="#04ded8"/><rect x="0" y="0" width="1" height="1" fill="#04ded8"/><rect x="2" y="1" width="1" height="1" fill="#04ded8"/><rect x="3" y="1" width="1" height="1" fill="#04ded8"/><rect x="1" y="2" width="1" height="1" fill="#04ded8"/><rect x="2" y="2" width="1" height="1" fill="#04ded8"/><rect x="0" y="3" width="1" height="1" fill="#04ded8"/><rect x="1" y="3" width="1" height="1" fill="#04ded8"/></pattern></defs><rect x="585" y="228" width="57" height="21" fill="url(#hgray)"/><rect x="642" y="228" width="51" height="21" fill="url(#hgray)"/><rect x="693" y="228" width="71" height="21" fill="url(#hgray)"/><rect x="764" y="228" width="161" height="21" fill="url(#hgray)"/><rect x="925" y="228" width="146" height="21" fill="url(#hgray)"/><rect x="1071" y="228" width="51" height="21" fill="url(#hgray)"/><rect x="1122" y="228" width="78" height="21" fill="url(#hgray)"/><rect x="1200" y="228" width="774" height="21" fill="url(#hgray)"/><rect x="1974" y="228" width="161" height="21" fill="url(#hgray)"/><rect x="2135" y="228" width="84" height="21" fill="url(#hgray)"/><rect x="2219" y="228" width="66" height="21" fill="url(#hgray)"/><rect x="2285" y="228" width="58" height="21" fill="url(#hgray)"/><rect x="2343" y="228" width="42" height="21" fill="url(#hgray)"/><rect x="2385" y="228" width="131" height="21" fill="url(#hgray)"/><rect x="585" y="249" width="57" height="21" fill="url(#hgray)"/><rect x="642" y="249" width="51" height="21" fill="url(#hgray)"/><rect x="693" y="249" width="71" height="21" fill="url(#hgray)"/><rect x="764" y="249" width="161" height="21" fill="url(#hgray)"/><rect x="925" y="249" width="146" height="21" fill="url(#hgray)"/><rect x="1071" y="249" width="51" height="21" fill="url(#hgray)"/><rect x="1122" y="249" width="78" height="21" fill="url(#hgray)"/><rect x="1200" y="249" width="774" height="21" fill="url(#hgray)"/><rect x="1974" y="249" width="161" height="21" fill="url(#hgray)"/><rect x="2135" y="249" width="84" height="21" fill="url(#hgray)"/><rect x="2219" y="249" width="66" height="21" fill="url(#hgray)"/><rect x="2285" y="249" width="58" height="21" fill="url(#hgray)"/><rect x="2343" y="249" width="42" height="21" fill="url(#hgray)"/><rect x="2385" y="249" width="131" height="21" fill="url(#hgray)"/><rect x="585" y="270" width="57" height="21" fill="url(#hgray)"/><rect x="642" y="270" width="51" height="21" fill="url(#hgray)"/><rect x="693" y="270" width="71" height="21" fill="url(#hgray)"/><rect x="764" y="270" width="161" height="21" fill="url(#hgray)"/><rect x="925" y="270" width="146" height="21" fill="url(#hgray)"/><rect x="1071" y="270" width="51" height="21" fill="url(#hgray)"/><rect x="1122" y="270" width="78" height="21" fill="url(#hgray)"/><rect x="1200" y="270" width="774" height="21" fill="url(#hgray)"/><rect x="1974" y="270" width="161" height="21" fill="url(#hgray)"/><rect x="2135" y="270" width="84" height="21" fill="url(#hgray)"/><rect x="2219" y="270" width="66" height="21" fill="url(#hgray)"/><rect x="2285" y="270" width="58" height="21" fill="url(#hgray)"/><rect x="2343" y="270" width="42" height="21" fill="url(#hgray)"/><rect x="2385" y="270" width="131" height="21" fill="url(#hgray)"/><rect x="585" y="291" width="57" height="21" fill="url(#hgray)"/><rect x="642" y="291" width="51" height="21" fill="url(#hgray)"/><rect x="693" y="291" width="71" height="21" fill="url(#hgray)"/><rect x="764" y="291" width="161" height="21" fill="url(#hgray)"/><rect x="925" y="291" width="146" height="21" fill="url(#hgray)"/><rect x="1071" y="291" width="51" height="21" fill="url(#hgray)"/><rect x="1122" y="291" width="78" height="21" fill="url(#hgray)"/><rect x="1200" y="291" width="774" height="21" fill="url(#hgray)"/><rect x="1974" y="291" width="161" height="21" fill="url(#hgray)"/><rect x="2135" y="291" width="84" height="21" fill="url(#hgray)"/><rect x="2219" y="291" width="66" height="21" fill="url(#hgray)"/><rect x="2285" y="291" width="58" height="21" fill="url(#hgray)"/><rect x="2343" y="291" width="42" height="21" fill="url(#hgray)"/><rect x="2385" y="291" width="131" height="21" fill="url(#hgray)"/><rect x="764" y="312" width="161" height="21" fill="url(#hteal)"/><rect x="1071" y="312" width="51" height="21" fill="url(#hteal)"/><rect x="1122" y="312" width="78" height="21" fill="url(#hteal)"/><rect x="1200" y="312" width="774" height="21" fill="url(#hteal)"/><rect x="1974" y="312" width="161" height="21" fill="url(#hteal)"/><rect x="2385" y="312" width="131" height="21" fill="url(#hteal)"/><rect x="764" y="333" width="161" height="21" fill="url(#holive)"/><rect x="925" y="333" width="146" height="21" fill="url(#holive)"/><rect x="1071" y="333" width="51" height="21" fill="url(#holive)"/><rect x="1122" y="333" width="78" height="21" fill="url(#holive)"/><rect x="2285" y="333" width="58" height="21" fill="url(#holive)"/><rect x="2343" y="333" width="42" height="21" fill="url(#holive)"/><rect x="2385" y="333" width="131" height="21" fill="url(#holive)"/><rect x="764" y="354" width="161" height="21" fill="url(#hcyan)"/><rect x="1071" y="354" width="51" height="21" fill="url(#hcyan)"/><rect x="1122" y="354" width="78" height="21" fill="url(#hcyan)"/><rect x="1974" y="354" width="161" height="21" fill="url(#hcyan)"/><rect x="2385" y="354" width="131" height="21" fill="url(#hcyan)"/><rect x="764" y="375" width="161" height="21" fill="url(#holive)"/><rect x="925" y="375" width="146" height="21" fill="url(#holive)"/><rect x="1071" y="375" width="51" height="21" fill="url(#holive)"/><rect x="1122" y="375" width="78" height="21" fill="url(#holive)"/><rect x="1200" y="375" width="774" height="21" fill="url(#holive)"/><rect x="2285" y="375" width="58" height="21" fill="url(#holive)"/><rect x="2343" y="375" width="42" height="21" fill="url(#holive)"/><rect x="2385" y="375" width="131" height="21" fill="url(#holive)"/></svg>
<div class="t" style="left:68px;top:231px;font-family:'Liberation Mono',monospace;font-size:12px;color:#101010">765746</div>
<div class="t" style="left:142px;top:231px;font-family:'Liberation Mono',monospace;font-size:12px;color:#101010">6.967596870 s</div>
<div style="position:absolute;left:139px;top:228px;width:1px;height:21px;background:repeating-linear-gradient(#b4b4b4 0 1px,transparent 1px 2px)"></div>
<div class="t" style="left:273px;top:231px;font-family:'Liberation Mono',monospace;font-size:12px;color:#101010">TS2</div>
<div style="position:absolute;left:270px;top:228px;width:1px;height:21px;background:repeating-linear-gradient(#b4b4b4 0 1px,transparent 1px 2px)"></div>
<div class="t" style="left:383px;top:231px;font-family:'Liberation Mono',monospace;font-size:12px;color:#101010">Gen2</div>
<div style="position:absolute;left:380px;top:228px;width:1px;height:21px;background:repeating-linear-gradient(#b4b4b4 0 1px,transparent 1px 2px)"></div>
<div class="t" style="left:455px;top:231px;font-family:'Liberation Mono',monospace;font-size:12px;color:#101010">PCIe-101:Up</div>
<div style="position:absolute;left:452px;top:228px;width:1px;height:21px;background:repeating-linear-gradient(#b4b4b4 0 1px,transparent 1px 2px)"></div>
<div style="position:absolute;left:585px;top:228px;width:1px;height:21px;background:repeating-linear-gradient(#b4b4b4 0 1px,transparent 1px 2px)"></div>
<div style="position:absolute;left:642px;top:228px;width:1px;height:21px;background:repeating-linear-gradient(#b4b4b4 0 1px,transparent 1px 2px)"></div>
<div style="position:absolute;left:693px;top:228px;width:1px;height:21px;background:repeating-linear-gradient(#b4b4b4 0 1px,transparent 1px 2px)"></div>
<div style="position:absolute;left:764px;top:228px;width:1px;height:21px;background:repeating-linear-gradient(#b4b4b4 0 1px,transparent 1px 2px)"></div>
<div style="position:absolute;left:925px;top:228px;width:1px;height:21px;background:repeating-linear-gradient(#b4b4b4 0 1px,transparent 1px 2px)"></div>
<div style="position:absolute;left:1071px;top:228px;width:1px;height:21px;background:repeating-linear-gradient(#b4b4b4 0 1px,transparent 1px 2px)"></div>
<div style="position:absolute;left:1122px;top:228px;width:1px;height:21px;background:repeating-linear-gradient(#b4b4b4 0 1px,transparent 1px 2px)"></div>
<div style="position:absolute;left:1200px;top:228px;width:1px;height:21px;background:repeating-linear-gradient(#b4b4b4 0 1px,transparent 1px 2px)"></div>
<div style="position:absolute;left:1974px;top:228px;width:1px;height:21px;background:repeating-linear-gradient(#b4b4b4 0 1px,transparent 1px 2px)"></div>
<div style="position:absolute;left:2135px;top:228px;width:1px;height:21px;background:repeating-linear-gradient(#b4b4b4 0 1px,transparent 1px 2px)"></div>
<div style="position:absolute;left:2219px;top:228px;width:1px;height:21px;background:repeating-linear-gradient(#b4b4b4 0 1px,transparent 1px 2px)"></div>
<div style="position:absolute;left:2285px;top:228px;width:1px;height:21px;background:repeating-linear-gradient(#b4b4b4 0 1px,transparent 1px 2px)"></div>
<div style="position:absolute;left:2343px;top:228px;width:1px;height:21px;background:repeating-linear-gradient(#b4b4b4 0 1px,transparent 1px 2px)"></div>
<div style="position:absolute;left:2385px;top:228px;width:1px;height:21px;background:repeating-linear-gradient(#b4b4b4 0 1px,transparent 1px 2px)"></div>
<div style="position:absolute;left:65px;top:248px;width:2451px;height:1px;background:repeating-linear-gradient(90deg,#b4b4b4 0 1px,transparent 1px 2px)"></div>
<div class="t" style="left:68px;top:252px;font-family:'Liberation Mono',monospace;font-size:12px;color:#101010">765747</div>
<div class="t" style="left:142px;top:252px;font-family:'Liberation Mono',monospace;font-size:12px;color:#101010">6.967596902 s</div>
<div style="position:absolute;left:139px;top:249px;width:1px;height:21px;background:repeating-linear-gradient(#b4b4b4 0 1px,transparent 1px 2px)"></div>
<div class="t" style="left:273px;top:252px;font-family:'Liberation Mono',monospace;font-size:12px;color:#101010">TS2</div>
<div style="position:absolute;left:270px;top:249px;width:1px;height:21px;background:repeating-linear-gradient(#b4b4b4 0 1px,transparent 1px 2px)"></div>
<div class="t" style="left:383px;top:252px;font-family:'Liberation Mono',monospace;font-size:12px;color:#101010">Gen2</div>
<div style="position:absolute;left:380px;top:249px;width:1px;height:21px;background:repeating-linear-gradient(#b4b4b4 0 1px,transparent 1px 2px)"></div>
<div class="t" style="left:455px;top:252px;font-family:'Liberation Mono',monospace;font-size:12px;color:#101010">PCIe-101:Up</div>
<div style="position:absolute;left:452px;top:249px;width:1px;height:21px;background:repeating-linear-gradient(#b4b4b4 0 1px,transparent 1px 2px)"></div>
<div style="position:absolute;left:585px;top:249px;width:1px;height:21px;background:repeating-linear-gradient(#b4b4b4 0 1px,transparent 1px 2px)"></div>
<div style="position:absolute;left:642px;top:249px;width:1px;height:21px;background:repeating-linear-gradient(#b4b4b4 0 1px,transparent 1px 2px)"></div>
<div style="position:absolute;left:693px;top:249px;width:1px;height:21px;background:repeating-linear-gradient(#b4b4b4 0 1px,transparent 1px 2px)"></div>
<div style="position:absolute;left:764px;top:249px;width:1px;height:21px;background:repeating-linear-gradient(#b4b4b4 0 1px,transparent 1px 2px)"></div>
<div style="position:absolute;left:925px;top:249px;width:1px;height:21px;background:repeating-linear-gradient(#b4b4b4 0 1px,transparent 1px 2px)"></div>
<div style="position:absolute;left:1071px;top:249px;width:1px;height:21px;background:repeating-linear-gradient(#b4b4b4 0 1px,transparent 1px 2px)"></div>
<div style="position:absolute;left:1122px;top:249px;width:1px;height:21px;background:repeating-linear-gradient(#b4b4b4 0 1px,transparent 1px 2px)"></div>
<div style="position:absolute;left:1200px;top:249px;width:1px;height:21px;background:repeating-linear-gradient(#b4b4b4 0 1px,transparent 1px 2px)"></div>
<div style="position:absolute;left:1974px;top:249px;width:1px;height:21px;background:repeating-linear-gradient(#b4b4b4 0 1px,transparent 1px 2px)"></div>
<div style="position:absolute;left:2135px;top:249px;width:1px;height:21px;background:repeating-linear-gradient(#b4b4b4 0 1px,transparent 1px 2px)"></div>
<div style="position:absolute;left:2219px;top:249px;width:1px;height:21px;background:repeating-linear-gradient(#b4b4b4 0 1px,transparent 1px 2px)"></div>
<div style="position:absolute;left:2285px;top:249px;width:1px;height:21px;background:repeating-linear-gradient(#b4b4b4 0 1px,transparent 1px 2px)"></div>
<div style="position:absolute;left:2343px;top:249px;width:1px;height:21px;background:repeating-linear-gradient(#b4b4b4 0 1px,transparent 1px 2px)"></div>
<div style="position:absolute;left:2385px;top:249px;width:1px;height:21px;background:repeating-linear-gradient(#b4b4b4 0 1px,transparent 1px 2px)"></div>
<div style="position:absolute;left:65px;top:269px;width:2451px;height:1px;background:repeating-linear-gradient(90deg,#b4b4b4 0 1px,transparent 1px 2px)"></div>
<div class="t" style="left:68px;top:273px;font-family:'Liberation Mono',monospace;font-size:12px;color:#101010">765748</div>
<div class="t" style="left:142px;top:273px;font-family:'Liberation Mono',monospace;font-size:12px;color:#101010">6.967596934 s</div>
<div style="position:absolute;left:139px;top:270px;width:1px;height:21px;background:repeating-linear-gradient(#b4b4b4 0 1px,transparent 1px 2px)"></div>
<div class="t" style="left:273px;top:273px;font-family:'Liberation Mono',monospace;font-size:12px;color:#101010">TS2</div>
<div style="position:absolute;left:270px;top:270px;width:1px;height:21px;background:repeating-linear-gradient(#b4b4b4 0 1px,transparent 1px 2px)"></div>
<div class="t" style="left:383px;top:273px;font-family:'Liberation Mono',monospace;font-size:12px;color:#101010">Gen2</div>
<div style="position:absolute;left:380px;top:270px;width:1px;height:21px;background:repeating-linear-gradient(#b4b4b4 0 1px,transparent 1px 2px)"></div>
<div class="t" style="left:455px;top:273px;font-family:'Liberation Mono',monospace;font-size:12px;color:#101010">PCIe-101:Up</div>
<div style="position:absolute;left:452px;top:270px;width:1px;height:21px;background:repeating-linear-gradient(#b4b4b4 0 1px,transparent 1px 2px)"></div>
<div style="position:absolute;left:585px;top:270px;width:1px;height:21px;background:repeating-linear-gradient(#b4b4b4 0 1px,transparent 1px 2px)"></div>
<div style="position:absolute;left:642px;top:270px;width:1px;height:21px;background:repeating-linear-gradient(#b4b4b4 0 1px,transparent 1px 2px)"></div>
<div style="position:absolute;left:693px;top:270px;width:1px;height:21px;background:repeating-linear-gradient(#b4b4b4 0 1px,transparent 1px 2px)"></div>
<div style="position:absolute;left:764px;top:270px;width:1px;height:21px;background:repeating-linear-gradient(#b4b4b4 0 1px,transparent 1px 2px)"></div>
<div style="position:absolute;left:925px;top:270px;width:1px;height:21px;background:repeating-linear-gradient(#b4b4b4 0 1px,transparent 1px 2px)"></div>
<div style="position:absolute;left:1071px;top:270px;width:1px;height:21px;background:repeating-linear-gradient(#b4b4b4 0 1px,transparent 1px 2px)"></div>
<div style="position:absolute;left:1122px;top:270px;width:1px;height:21px;background:repeating-linear-gradient(#b4b4b4 0 1px,transparent 1px 2px)"></div>
<div style="position:absolute;left:1200px;top:270px;width:1px;height:21px;background:repeating-linear-gradient(#b4b4b4 0 1px,transparent 1px 2px)"></div>
<div style="position:absolute;left:1974px;top:270px;width:1px;height:21px;background:repeating-linear-gradient(#b4b4b4 0 1px,transparent 1px 2px)"></div>
<div style="position:absolute;left:2135px;top:270px;width:1px;height:21px;background:repeating-linear-gradient(#b4b4b4 0 1px,transparent 1px 2px)"></div>
<div style="position:absolute;left:2219px;top:270px;width:1px;height:21px;background:repeating-linear-gradient(#b4b4b4 0 1px,transparent 1px 2px)"></div>
<div style="position:absolute;left:2285px;top:270px;width:1px;height:21px;background:repeating-linear-gradient(#b4b4b4 0 1px,transparent 1px 2px)"></div>
<div style="position:absolute;left:2343px;top:270px;width:1px;height:21px;background:repeating-linear-gradient(#b4b4b4 0 1px,transparent 1px 2px)"></div>
<div style="position:absolute;left:2385px;top:270px;width:1px;height:21px;background:repeating-linear-gradient(#b4b4b4 0 1px,transparent 1px 2px)"></div>
<div style="position:absolute;left:65px;top:290px;width:2451px;height:1px;background:repeating-linear-gradient(90deg,#b4b4b4 0 1px,transparent 1px 2px)"></div>
<div class="t" style="left:68px;top:294px;font-family:'Liberation Mono',monospace;font-size:12px;color:#101010">765749</div>
<div class="t" style="left:142px;top:294px;font-family:'Liberation Mono',monospace;font-size:12px;color:#101010">6.967596966 s</div>
<div style="position:absolute;left:139px;top:291px;width:1px;height:21px;background:repeating-linear-gradient(#b4b4b4 0 1px,transparent 1px 2px)"></div>
<div class="t" style="left:273px;top:294px;font-family:'Liberation Mono',monospace;font-size:12px;color:#101010">TS2</div>
<div style="position:absolute;left:270px;top:291px;width:1px;height:21px;background:repeating-linear-gradient(#b4b4b4 0 1px,transparent 1px 2px)"></div>
<div class="t" style="left:383px;top:294px;font-family:'Liberation Mono',monospace;font-size:12px;color:#101010">Gen2</div>
<div style="position:absolute;left:380px;top:291px;width:1px;height:21px;background:repeating-linear-gradient(#b4b4b4 0 1px,transparent 1px 2px)"></div>
<div class="t" style="left:455px;top:294px;font-family:'Liberation Mono',monospace;font-size:12px;color:#101010">PCIe-101:Up</div>
<div style="position:absolute;left:452px;top:291px;width:1px;height:21px;background:repeating-linear-gradient(#b4b4b4 0 1px,transparent 1px 2px)"></div>
<div style="position:absolute;left:585px;top:291px;width:1px;height:21px;background:repeating-linear-gradient(#b4b4b4 0 1px,transparent 1px 2px)"></div>
<div style="position:absolute;left:642px;top:291px;width:1px;height:21px;background:repeating-linear-gradient(#b4b4b4 0 1px,transparent 1px 2px)"></div>
<div style="position:absolute;left:693px;top:291px;width:1px;height:21px;background:repeating-linear-gradient(#b4b4b4 0 1px,transparent 1px 2px)"></div>
<div style="position:absolute;left:764px;top:291px;width:1px;height:21px;background:repeating-linear-gradient(#b4b4b4 0 1px,transparent 1px 2px)"></div>
<div style="position:absolute;left:925px;top:291px;width:1px;height:21px;background:repeating-linear-gradient(#b4b4b4 0 1px,transparent 1px 2px)"></div>
<div style="position:absolute;left:1071px;top:291px;width:1px;height:21px;background:repeating-linear-gradient(#b4b4b4 0 1px,transparent 1px 2px)"></div>
<div style="position:absolute;left:1122px;top:291px;width:1px;height:21px;background:repeating-linear-gradient(#b4b4b4 0 1px,transparent 1px 2px)"></div>
<div style="position:absolute;left:1200px;top:291px;width:1px;height:21px;background:repeating-linear-gradient(#b4b4b4 0 1px,transparent 1px 2px)"></div>
<div style="position:absolute;left:1974px;top:291px;width:1px;height:21px;background:repeating-linear-gradient(#b4b4b4 0 1px,transparent 1px 2px)"></div>
<div style="position:absolute;left:2135px;top:291px;width:1px;height:21px;background:repeating-linear-gradient(#b4b4b4 0 1px,transparent 1px 2px)"></div>
<div style="position:absolute;left:2219px;top:291px;width:1px;height:21px;background:repeating-linear-gradient(#b4b4b4 0 1px,transparent 1px 2px)"></div>
<div style="position:absolute;left:2285px;top:291px;width:1px;height:21px;background:repeating-linear-gradient(#b4b4b4 0 1px,transparent 1px 2px)"></div>
<div style="position:absolute;left:2343px;top:291px;width:1px;height:21px;background:repeating-linear-gradient(#b4b4b4 0 1px,transparent 1px 2px)"></div>
<div style="position:absolute;left:2385px;top:291px;width:1px;height:21px;background:repeating-linear-gradient(#b4b4b4 0 1px,transparent 1px 2px)"></div>
<div style="position:absolute;left:65px;top:311px;width:2451px;height:1px;background:repeating-linear-gradient(90deg,#b4b4b4 0 1px,transparent 1px 2px)"></div>
<div class="t" style="left:68px;top:315px;font-family:'Liberation Mono',monospace;font-size:12px;color:#101010">342131</div>
<div class="t" style="left:142px;top:315px;font-family:'Liberation Mono',monospace;font-size:12px;color:#101010">6.967597685 s</div>
<div style="position:absolute;left:139px;top:312px;width:1px;height:21px;background:repeating-linear-gradient(#f0f0f0 0 1px,transparent 1px 2px)"></div>
<div class="t" style="left:273px;top:315px;font-family:'Liberation Mono',monospace;font-size:12px;color:#101010">CfgRd_1</div>
<div style="position:absolute;left:270px;top:312px;width:1px;height:21px;background:repeating-linear-gradient(#f0f0f0 0 1px,transparent 1px 2px)"></div>
<div class="t" style="left:383px;top:315px;font-family:'Liberation Mono',monospace;font-size:12px;color:#101010">Gen2</div>
<div style="position:absolute;left:380px;top:312px;width:1px;height:21px;background:repeating-linear-gradient(#f0f0f0 0 1px,transparent 1px 2px)"></div>
<div class="t" style="left:455px;top:315px;font-family:'Liberation Mono',monospace;font-size:12px;color:#101010">PCIe-101:Down</div>
<div style="position:absolute;left:452px;top:312px;width:1px;height:21px;background:repeating-linear-gradient(#f0f0f0 0 1px,transparent 1px 2px)"></div>
<div class="t" style="left:588px;top:315px;font-family:'Liberation Mono',monospace;font-size:12px;color:#101010">59E</div>
<div style="position:absolute;left:585px;top:312px;width:1px;height:21px;background:repeating-linear-gradient(#f0f0f0 0 1px,transparent 1px 2px)"></div>
<div class="t" style="left:645px;top:315px;font-family:'Liberation Mono',monospace;font-size:12px;color:#101010">00</div>
<div style="position:absolute;left:642px;top:312px;width:1px;height:21px;background:repeating-linear-gradient(#f0f0f0 0 1px,transparent 1px 2px)"></div>
<div class="t" style="left:696px;top:315px;font-family:'Liberation Mono',monospace;font-size:12px;color:#101010">001</div>
<div style="position:absolute;left:693px;top:312px;width:1px;height:21px;background:repeating-linear-gradient(#f0f0f0 0 1px,transparent 1px 2px)"></div>
<div style="position:absolute;left:764px;top:312px;width:1px;height:21px;background:repeating-linear-gradient(#f0f0f0 0 1px,transparent 1px 2px)"></div>
<div class="t" style="left:928px;top:315px;font-family:'Liberation Mono',monospace;font-size:12px;color:#101010">22</div>
<div style="position:absolute;left:925px;top:312px;width:1px;height:21px;background:repeating-linear-gradient(#f0f0f0 0 1px,transparent 1px 2px)"></div>
<div style="position:absolute;left:1071px;top:312px;width:1px;height:21px;background:repeating-linear-gradient(#f0f0f0 0 1px,transparent 1px 2px)"></div>
<div style="position:absolute;left:1122px;top:312px;width:1px;height:21px;background:repeating-linear-gradient(#f0f0f0 0 1px,transparent 1px 2px)"></div>
<div style="position:absolute;left:1200px;top:312px;width:1px;height:21px;background:repeating-linear-gradient(#f0f0f0 0 1px,transparent 1px 2px)"></div>
<div style="position:absolute;left:1974px;top:312px;width:1px;height:21px;background:repeating-linear-gradient(#f0f0f0 0 1px,transparent 1px 2px)"></div>
<div class="t" style="left:2138px;top:315px;font-family:'Liberation Mono',monospace;font-size:12px;color:#101010">0000</div>
<div style="position:absolute;left:2135px;top:312px;width:1px;height:21px;background:repeating-linear-gradient(#f0f0f0 0 1px,transparent 1px 2px)"></div>
<div class="t" style="left:2222px;top:315px;font-family:'Liberation Mono',monospace;font-size:12px;color:#101010">1B00</div>
<div style="position:absolute;left:2219px;top:312px;width:1px;height:21px;background:repeating-linear-gradient(#f0f0f0 0 1px,transparent 1px 2px)"></div>
<div class="t" style="left:2288px;top:315px;font-family:'Liberation Mono',monospace;font-size:12px;color:#101010">3</div>
<div style="position:absolute;left:2285px;top:312px;width:1px;height:21px;background:repeating-linear-gradient(#f0f0f0 0 1px,transparent 1px 2px)"></div>
<div class="t" style="left:2346px;top:315px;font-family:'Liberation Mono',monospace;font-size:12px;color:#101010">0</div>
<div style="position:absolute;left:2343px;top:312px;width:1px;height:21px;background:repeating-linear-gradient(#f0f0f0 0 1px,transparent 1px 2px)"></div>
<div style="position:absolute;left:2385px;top:312px;width:1px;height:21px;background:repeating-linear-gradient(#f0f0f0 0 1px,transparent 1px 2px)"></div>
<div style="position:absolute;left:65px;top:332px;width:2451px;height:1px;background:repeating-linear-gradient(90deg,#f4f4f4 0 1px,transparent 1px 2px)"></div>
<div class="t" style="left:68px;top:336px;font-family:'Liberation Mono',monospace;font-size:12px;color:#101010">765750</div>
<div class="t" style="left:142px;top:336px;font-family:'Liberation Mono',monospace;font-size:12px;color:#101010">6.967598674 s</div>
<div style="position:absolute;left:139px;top:333px;width:1px;height:21px;background:repeating-linear-gradient(#f0f0f0 0 1px,transparent 1px 2px)"></div>
<div class="t" style="left:273px;top:336px;font-family:'Liberation Mono',monospace;font-size:12px;color:#101010">CplD</div>
<div style="position:absolute;left:270px;top:333px;width:1px;height:21px;background:repeating-linear-gradient(#f0f0f0 0 1px,transparent 1px 2px)"></div>
<div class="t" style="left:383px;top:336px;font-family:'Liberation Mono',monospace;font-size:12px;color:#101010">Gen2</div>
<div style="position:absolute;left:380px;top:333px;width:1px;height:21px;background:repeating-linear-gradient(#f0f0f0 0 1px,transparent 1px 2px)"></div>
<div class="t" style="left:455px;top:336px;font-family:'Liberation Mono',monospace;font-size:12px;color:#101010">PCIe-101:Up</div>
<div style="position:absolute;left:452px;top:333px;width:1px;height:21px;background:repeating-linear-gradient(#f0f0f0 0 1px,transparent 1px 2px)"></div>
<div class="t" style="left:588px;top:336px;font-family:'Liberation Mono',monospace;font-size:12px;color:#101010">59C</div>
<div style="position:absolute;left:585px;top:333px;width:1px;height:21px;background:repeating-linear-gradient(#f0f0f0 0 1px,transparent 1px 2px)"></div>
<div class="t" style="left:645px;top:336px;font-family:'Liberation Mono',monospace;font-size:12px;color:#101010">00</div>
<div style="position:absolute;left:642px;top:333px;width:1px;height:21px;background:repeating-linear-gradient(#f0f0f0 0 1px,transparent 1px 2px)"></div>
<div class="t" style="left:696px;top:336px;font-family:'Liberation Mono',monospace;font-size:12px;color:#101010">001</div>
<div style="position:absolute;left:693px;top:333px;width:1px;height:21px;background:repeating-linear-gradient(#f0f0f0 0 1px,transparent 1px 2px)"></div>
<div style="position:absolute;left:764px;top:333px;width:1px;height:21px;background:repeating-linear-gradient(#f0f0f0 0 1px,transparent 1px 2px)"></div>
<div style="position:absolute;left:925px;top:333px;width:1px;height:21px;background:repeating-linear-gradient(#f0f0f0 0 1px,transparent 1px 2px)"></div>
<div style="position:absolute;left:1071px;top:333px;width:1px;height:21px;background:repeating-linear-gradient(#f0f0f0 0 1px,transparent 1px 2px)"></div>
<div style="position:absolute;left:1122px;top:333px;width:1px;height:21px;background:repeating-linear-gradient(#f0f0f0 0 1px,transparent 1px 2px)"></div>
<div class="t" style="left:1203px;top:336px;font-family:'Liberation Mono',monospace;font-size:12px;color:#101010">00002800</div>
<div style="position:absolute;left:1200px;top:333px;width:1px;height:21px;background:repeating-linear-gradient(#f0f0f0 0 1px,transparent 1px 2px)"></div>
<div class="t" style="left:1977px;top:336px;font-family:'Liberation Mono',monospace;font-size:12px;color:#101010">Successful Completio…</div>
<div style="position:absolute;left:1974px;top:333px;width:1px;height:21px;background:repeating-linear-gradient(#f0f0f0 0 1px,transparent 1px 2px)"></div>
<div class="t" style="left:2138px;top:336px;font-family:'Liberation Mono',monospace;font-size:12px;color:#101010">0000</div>
<div style="position:absolute;left:2135px;top:333px;width:1px;height:21px;background:repeating-linear-gradient(#f0f0f0 0 1px,transparent 1px 2px)"></div>
<div class="t" style="left:2222px;top:336px;font-family:'Liberation Mono',monospace;font-size:12px;color:#101010">1B00</div>
<div style="position:absolute;left:2219px;top:333px;width:1px;height:21px;background:repeating-linear-gradient(#f0f0f0 0 1px,transparent 1px 2px)"></div>
<div style="position:absolute;left:2285px;top:333px;width:1px;height:21px;background:repeating-linear-gradient(#f0f0f0 0 1px,transparent 1px 2px)"></div>
<div style="position:absolute;left:2343px;top:333px;width:1px;height:21px;background:repeating-linear-gradient(#f0f0f0 0 1px,transparent 1px 2px)"></div>
<div style="position:absolute;left:2385px;top:333px;width:1px;height:21px;background:repeating-linear-gradient(#f0f0f0 0 1px,transparent 1px 2px)"></div>
<div style="position:absolute;left:65px;top:353px;width:2451px;height:1px;background:repeating-linear-gradient(90deg,#f4f4f4 0 1px,transparent 1px 2px)"></div>
<div class="t" style="left:68px;top:357px;font-family:'Liberation Mono',monospace;font-size:12px;color:#101010">342132</div>
<div class="t" style="left:142px;top:357px;font-family:'Liberation Mono',monospace;font-size:12px;color:#101010">6.967598992 s</div>
<div style="position:absolute;left:139px;top:354px;width:1px;height:21px;background:repeating-linear-gradient(#f0f0f0 0 1px,transparent 1px 2px)"></div>
<div class="t" style="left:273px;top:357px;font-family:'Liberation Mono',monospace;font-size:12px;color:#101010">CfgWr_1</div>
<div style="position:absolute;left:270px;top:354px;width:1px;height:21px;background:repeating-linear-gradient(#f0f0f0 0 1px,transparent 1px 2px)"></div>
<div class="t" style="left:383px;top:357px;font-family:'Liberation Mono',monospace;font-size:12px;color:#101010">Gen2</div>
<div style="position:absolute;left:380px;top:354px;width:1px;height:21px;background:repeating-linear-gradient(#f0f0f0 0 1px,transparent 1px 2px)"></div>
<div class="t" style="left:455px;top:357px;font-family:'Liberation Mono',monospace;font-size:12px;color:#101010">PCIe-101:Down</div>
<div style="position:absolute;left:452px;top:354px;width:1px;height:21px;background:repeating-linear-gradient(#f0f0f0 0 1px,transparent 1px 2px)"></div>
<div class="t" style="left:588px;top:357px;font-family:'Liberation Mono',monospace;font-size:12px;color:#101010">59F</div>
<div style="position:absolute;left:585px;top:354px;width:1px;height:21px;background:repeating-linear-gradient(#f0f0f0 0 1px,transparent 1px 2px)"></div>
<div class="t" style="left:645px;top:357px;font-family:'Liberation Mono',monospace;font-size:12px;color:#101010">00</div>
<div style="position:absolute;left:642px;top:354px;width:1px;height:21px;background:repeating-linear-gradient(#f0f0f0 0 1px,transparent 1px 2px)"></div>
<div class="t" style="left:696px;top:357px;font-family:'Liberation Mono',monospace;font-size:12px;color:#101010">001</div>
<div style="position:absolute;left:693px;top:354px;width:1px;height:21px;background:repeating-linear-gradient(#f0f0f0 0 1px,transparent 1px 2px)"></div>
<div style="position:absolute;left:764px;top:354px;width:1px;height:21px;background:repeating-linear-gradient(#f0f0f0 0 1px,transparent 1px 2px)"></div>
<div class="t" style="left:928px;top:357px;font-family:'Liberation Mono',monospace;font-size:12px;color:#101010">22</div>
<div style="position:absolute;left:925px;top:354px;width:1px;height:21px;background:repeating-linear-gradient(#f0f0f0 0 1px,transparent 1px 2px)"></div>
<div style="position:absolute;left:1071px;top:354px;width:1px;height:21px;background:repeating-linear-gradient(#f0f0f0 0 1px,transparent 1px 2px)"></div>
<div style="position:absolute;left:1122px;top:354px;width:1px;height:21px;background:repeating-linear-gradient(#f0f0f0 0 1px,transparent 1px 2px)"></div>
<div class="t" style="left:1203px;top:357px;font-family:'Liberation Mono',monospace;font-size:12px;color:#101010">CB082800</div>
<div style="position:absolute;left:1200px;top:354px;width:1px;height:21px;background:repeating-linear-gradient(#f0f0f0 0 1px,transparent 1px 2px)"></div>
<div style="position:absolute;left:1974px;top:354px;width:1px;height:21px;background:repeating-linear-gradient(#f0f0f0 0 1px,transparent 1px 2px)"></div>
<div class="t" style="left:2138px;top:357px;font-family:'Liberation Mono',monospace;font-size:12px;color:#101010">0000</div>
<div style="position:absolute;left:2135px;top:354px;width:1px;height:21px;background:repeating-linear-gradient(#f0f0f0 0 1px,transparent 1px 2px)"></div>
<div class="t" style="left:2222px;top:357px;font-family:'Liberation Mono',monospace;font-size:12px;color:#101010">1B00</div>
<div style="position:absolute;left:2219px;top:354px;width:1px;height:21px;background:repeating-linear-gradient(#f0f0f0 0 1px,transparent 1px 2px)"></div>
<div class="t" style="left:2288px;top:357px;font-family:'Liberation Mono',monospace;font-size:12px;color:#101010">3</div>
<div style="position:absolute;left:2285px;top:354px;width:1px;height:21px;background:repeating-linear-gradient(#f0f0f0 0 1px,transparent 1px 2px)"></div>
<div class="t" style="left:2346px;top:357px;font-family:'Liberation Mono',monospace;font-size:12px;color:#101010">0</div>
<div style="position:absolute;left:2343px;top:354px;width:1px;height:21px;background:repeating-linear-gradient(#f0f0f0 0 1px,transparent 1px 2px)"></div>
<div style="position:absolute;left:2385px;top:354px;width:1px;height:21px;background:repeating-linear-gradient(#f0f0f0 0 1px,transparent 1px 2px)"></div>
<div style="position:absolute;left:65px;top:374px;width:2451px;height:1px;background:repeating-linear-gradient(90deg,#f4f4f4 0 1px,transparent 1px 2px)"></div>
<div class="t" style="left:68px;top:378px;font-family:'Liberation Mono',monospace;font-size:12px;color:#101010">765751</div>
<div class="t" style="left:142px;top:378px;font-family:'Liberation Mono',monospace;font-size:12px;color:#101010">6.967599979 s</div>
<div style="position:absolute;left:139px;top:375px;width:1px;height:21px;background:repeating-linear-gradient(#f0f0f0 0 1px,transparent 1px 2px)"></div>
<div class="t" style="left:273px;top:378px;font-family:'Liberation Mono',monospace;font-size:12px;color:#101010">Cpl</div>
<div style="position:absolute;left:270px;top:375px;width:1px;height:21px;background:repeating-linear-gradient(#f0f0f0 0 1px,transparent 1px 2px)"></div>
<div class="t" style="left:383px;top:378px;font-family:'Liberation Mono',monospace;font-size:12px;color:#101010">Gen2</div>
<div style="position:absolute;left:380px;top:375px;width:1px;height:21px;background:repeating-linear-gradient(#f0f0f0 0 1px,transparent 1px 2px)"></div>
<div class="t" style="left:455px;top:378px;font-family:'Liberation Mono',monospace;font-size:12px;color:#101010">PCIe-101:Up</div>
<div style="position:absolute;left:452px;top:375px;width:1px;height:21px;background:repeating-linear-gradient(#f0f0f0 0 1px,transparent 1px 2px)"></div>
<div class="t" style="left:588px;top:378px;font-family:'Liberation Mono',monospace;font-size:12px;color:#101010">59D</div>
<div style="position:absolute;left:585px;top:375px;width:1px;height:21px;background:repeating-linear-gradient(#f0f0f0 0 1px,transparent 1px 2px)"></div>
<div class="t" style="left:645px;top:378px;font-family:'Liberation Mono',monospace;font-size:12px;color:#101010">00</div>
<div style="position:absolute;left:642px;top:375px;width:1px;height:21px;background:repeating-linear-gradient(#f0f0f0 0 1px,transparent 1px 2px)"></div>
<div class="t" style="left:696px;top:378px;font-family:'Liberation Mono',monospace;font-size:12px;color:#101010">000</div>
<div style="position:absolute;left:693px;top:375px;width:1px;height:21px;background:repeating-linear-gradient(#f0f0f0 0 1px,transparent 1px 2px)"></div>
<div style="position:absolute;left:764px;top:375px;width:1px;height:21px;background:repeating-linear-gradient(#f0f0f0 0 1px,transparent 1px 2px)"></div>
<div style="position:absolute;left:925px;top:375px;width:1px;height:21px;background:repeating-linear-gradient(#f0f0f0 0 1px,transparent 1px 2px)"></div>
<div style="position:absolute;left:1071px;top:375px;width:1px;height:21px;background:repeating-linear-gradient(#f0f0f0 0 1px,transparent 1px 2px)"></div>
<div style="position:absolute;left:1122px;top:375px;width:1px;height:21px;background:repeating-linear-gradient(#f0f0f0 0 1px,transparent 1px 2px)"></div>
<div style="position:absolute;left:1200px;top:375px;width:1px;height:21px;background:repeating-linear-gradient(#f0f0f0 0 1px,transparent 1px 2px)"></div>
<div class="t" style="left:1977px;top:378px;font-family:'Liberation Mono',monospace;font-size:12px;color:#101010">Successful Completio…</div>
<div style="position:absolute;left:1974px;top:375px;width:1px;height:21px;background:repeating-linear-gradient(#f0f0f0 0 1px,transparent 1px 2px)"></div>
<div class="t" style="left:2138px;top:378px;font-family:'Liberation Mono',monospace;font-size:12px;color:#101010">0000</div>
<div style="position:absolute;left:2135px;top:375px;width:1px;height:21px;background:repeating-linear-gradient(#f0f0f0 0 1px,transparent 1px 2px)"></div>
<div class="t" style="left:2222px;top:378px;font-family:'Liberation Mono',monospace;font-size:12px;color:#101010">1B00</div>
<div style="position:absolute;left:2219px;top:375px;width:1px;height:21px;background:repeating-linear-gradient(#f0f0f0 0 1px,transparent 1px 2px)"></div>
<div style="position:absolute;left:2285px;top:375px;width:1px;height:21px;background:repeating-linear-gradient(#f0f0f0 0 1px,transparent 1px 2px)"></div>
<div style="position:absolute;left:2343px;top:375px;width:1px;height:21px;background:repeating-linear-gradient(#f0f0f0 0 1px,transparent 1px 2px)"></div>
<div style="position:absolute;left:2385px;top:375px;width:1px;height:21px;background:repeating-linear-gradient(#f0f0f0 0 1px,transparent 1px 2px)"></div>
<div style="position:absolute;left:65px;top:395px;width:2451px;height:1px;background:repeating-linear-gradient(90deg,#f4f4f4 0 1px,transparent 1px 2px)"></div>
<div style="position:absolute;left:65px;top:312px;width:2451px;height:20px;border:2px solid #000080;border-right:none;box-sizing:border-box"></div>
<div style="position:absolute;left:65px;top:396px;width:2451px;height:18px;background:#eaeaea"></div>
<svg style="position:absolute;left:70px;top:400px" width="8" height="10"><path d="M6 1 L1 5 L6 9 Z" fill="#44546a"/></svg>
<div style="position:absolute;left:83px;top:397px;width:2412px;height:16px;border:1px solid #6d7d9a;border-radius:2px;background:linear-gradient(#e8ecf2,#c4ccd8 50%,#b0bccc 51%,#c4ccd8);box-sizing:border-box"></div>
<div style="position:absolute;left:1285px;top:401px;width:6px;height:8px;background:repeating-linear-gradient(90deg,#6a7890 0 1px,transparent 1px 2px)"></div>
<svg style="position:absolute;left:2502px;top:400px" width="8" height="10"><path d="M2 1 L7 5 L2 9 Z" fill="#44546a"/></svg>
<div style="position:absolute;left:2516px;top:202px;width:20px;height:212px;background:#f0f0f0"></div>
<svg style="position:absolute;left:2520px;top:208px" width="12" height="7"><path d="M1 6 L6 1 L11 6 Z" fill="#505050"/></svg>
<div style="position:absolute;left:2520px;top:221px;width:11px;height:10px;background:#ffff00;border:1px solid #000;box-sizing:border-box"></div>
<svg style="position:absolute;left:2521px;top:222px" width="9" height="8"><path d="M1 1 H8 M4.5 2 L1.5 6 H7.5 Z" stroke="#000" fill="#000" stroke-width="1"/></svg>
<div style="position:absolute;left:2520px;top:235px;width:11px;height:11px;background:#ff0000;border:1px solid #000;box-sizing:border-box"></div>
<div class="t" style="left:2522px;top:235px;font-size:9px;font-weight:bold;line-height:10px">T</div>
<svg style="position:absolute;left:2519px;top:246px" width="14" height="150"><path d="M3 0 V10 H10 V30 H3 V45 H10 V62 H3 V80 H10 V100 H3 V115 H10 V135" stroke="#c8c8c8" fill="none"/></svg>
<div style="position:absolute;left:2520px;top:273px;width:12px;height:3px;background:#f0e800"></div>
<div style="position:absolute;left:2517px;top:344px;width:15px;height:29px;border:1px solid #9aaabb;border-radius:2px;background:linear-gradient(90deg,#e8eef6,#d0dce8);box-sizing:border-box"></div>
<div style="position:absolute;left:2520px;top:383px;width:11px;height:11px;background:#00e8f0;border:1px solid #000;box-sizing:border-box"></div>
<svg style="position:absolute;left:2521px;top:384px" width="9" height="9"><path d="M1 7 H8 M4.5 6 L1.5 2 H7.5 Z" stroke="#000" fill="#000"/></svg>
<svg style="position:absolute;left:2520px;top:401px" width="12" height="7"><path d="M1 1 L6 6 L11 1 Z" fill="#505050"/></svg>
<div style="position:absolute;left:15px;top:423px;width:2530px;height:25px;background:linear-gradient(90deg,#e9ecf8,#f3f6fb)"></div>
<svg style="position:absolute;left:0;top:0" width="760" height="450"><defs><linearGradient id="tg" x1="0" y1="0" x2="0" y2="1"><stop offset="0" stop-color="#f4f8fd"/><stop offset="1" stop-color="#c6daee"/></linearGradient><linearGradient id="tga" x1="0" y1="0" x2="0" y2="1"><stop offset="0" stop-color="#ffffff"/><stop offset="1" stop-color="#dfecf9"/></linearGradient></defs><path d="M22 448 L34 435 Q36 433 39 433 H72 Q76 433 76 437 V448" fill="url(#tg)" stroke="#8aabc8"/><path d="M76 448 V437 Q76 433 80 433 H121 Q125 433 125 437 V448" fill="url(#tg)" stroke="#8aabc8"/><path d="M125 448 V437 Q125 433 129 433 H174 Q178 433 178 437 V448" fill="url(#tg)" stroke="#8aabc8"/><path d="M178 448 V437 Q178 433 182 433 H217 Q221 433 221 437 V448" fill="url(#tg)" stroke="#8aabc8"/><path d="M221 448 V437 Q221 433 225 433 H308 Q312 433 312 437 V448" fill="url(#tg)" stroke="#8aabc8"/><path d="M412 448 V437 Q412 433 416 433 H519 Q523 433 523 437 V448" fill="url(#tg)" stroke="#8aabc8"/><path d="M523 448 V437 Q523 433 527 433 H672 Q676 433 676 437 V448" fill="url(#tg)" stroke="#8aabc8"/><path d="M676 448 V437 Q676 433 680 433 H739 Q743 433 743 437 V448" fill="url(#tg)" stroke="#8aabc8"/><path d="M300 449 L316 433 Q318 431 321 431 H408 Q412 431 412 435 V449" fill="url(#tga)" stroke="#86abc9"/></svg>
<div class="t" style="left:37px;top:434px;font-size:12px;letter-spacing:-0.42px;color:#1a1a1a">Details</div>
<div class="t" style="left:84px;top:434px;font-size:12px;letter-spacing:-0.42px;color:#1a1a1a">Header</div>
<div class="t" style="left:133px;top:434px;font-size:12px;letter-spacing:-0.42px;color:#1a1a1a">Payload</div>
<div class="t" style="left:186px;top:434px;font-size:12px;letter-spacing:-0.42px;color:#1a1a1a">Lanes</div>
<div class="t" style="left:229px;top:434px;font-size:12px;letter-spacing:-0.42px;color:#1a1a1a">Traffic Overview</div>
<div class="t" style="left:420px;top:434px;font-size:12px;letter-spacing:-0.42px;color:#1a1a1a">Transaction Decode</div>
<div class="t" style="left:531px;top:434px;font-size:12px;letter-spacing:-0.42px;color:#1a1a1a">PCIe Performance Overview</div>
<div class="t" style="left:683px;top:434px;font-size:12px;letter-spacing:-0.42px;color:#1a1a1a">Compare 1</div>
<div class="t" style="left:320px;top:433px;font-size:12px;letter-spacing:-0.42px;font-weight:bold;letter-spacing:-0.75px">LTSSM Overview</div>
<svg style="position:absolute;left:2519px;top:433px" width="26" height="10"><path d="M1 2 H9 L5 6 Z" fill="#333c44"/><path d="M15 1 L23 9 M23 1 L15 9" stroke="#8a8a80" stroke-width="1.2"/></svg>
<div style="position:absolute;left:15px;top:447px;width:2530px;height:899px;border:1px solid #6a9ec2;border-radius:2px;background:#d6e6f8;box-shadow:inset 1px 1px 0 #fff;box-sizing:border-box"></div>
<div style="position:absolute;left:19px;top:451px;width:2522px;height:891px;border:1px solid #6a9ec2;background:#fff;box-sizing:border-box"></div>
<div style="position:absolute;left:22px;top:454px;width:2516px;height:885px;border-top:1px solid #8a8a8a;border-left:1px solid #8a8a8a;border-right:1px solid #a0a0a0;border-bottom:1px solid #a0a0a0;box-sizing:border-box;background:#f0f0f0"></div>
<div style="position:absolute;left:25px;top:463px;width:63px;height:41px;border:1px solid #c8d0d8;border-radius:3px;box-shadow:inset 1px 1px 0 #fff,1px 1px 0 #fff;box-sizing:border-box"></div><div style="position:absolute;left:30px;top:456px;width:44px;height:12px;background:#f0f0f0"></div><div class="t" style="left:32px;top:455px;font-size:12px;letter-spacing:-0.42px">Settings</div>
<div style="position:absolute;left:91px;top:463px;width:353px;height:41px;border:1px solid #c8d0d8;border-radius:3px;box-shadow:inset 1px 1px 0 #fff,1px 1px 0 #fff;box-sizing:border-box"></div><div style="position:absolute;left:96px;top:456px;width:66px;height:12px;background:#f0f0f0"></div><div class="t" style="left:98px;top:455px;font-size:12px;letter-spacing:-0.42px">Data Range</div>
<div style="position:absolute;left:449px;top:463px;width:283px;height:41px;border:1px solid #c8d0d8;border-radius:3px;box-shadow:inset 1px 1px 0 #fff,1px 1px 0 #fff;box-sizing:border-box"></div><div style="position:absolute;left:454px;top:456px;width:62px;height:12px;background:#f0f0f0"></div><div class="t" style="left:456px;top:455px;font-size:12px;letter-spacing:-0.42px">Navigation</div>
<div style="position:absolute;left:735px;top:463px;width:1801px;height:41px;border:1px solid #c8d0d8;border-radius:3px;box-shadow:inset 1px 1px 0 #fff,1px 1px 0 #fff;box-sizing:border-box"></div><div style="position:absolute;left:740px;top:456px;width:36px;height:12px;background:#f0f0f0"></div><div class="t" style="left:742px;top:455px;font-size:12px;letter-spacing:-0.42px">Event</div>
<div style="position:absolute;left:34px;top:473px;width:45px;height:21px;border:1px solid #707070;border-radius:3px;background:linear-gradient(#f2f2f2,#ebebeb 50%,#dddddd 51%,#cfcfcf);box-sizing:border-box;"></div>
<div class="t" style="left:37px;top:477px;font-size:12px;letter-spacing:-0.42px">Setup...</div>
<div style="position:absolute;left:95px;top:474px;width:131px;height:20px;border:1px solid #707070;border-radius:3px;background:linear-gradient(#f2f2f2,#ebebeb 50%,#dddddd 51%,#cfcfcf);box-sizing:border-box;"></div>
<div class="t" style="left:99px;top:477px;font-size:12px;letter-spacing:-0.42px">Beginning Of Data</div>
<svg style="position:absolute;left:210px;top:481px" width="9" height="6"><path d="M0 0 H8 L4 5 Z" fill="#000"/></svg>
<div class="t" style="left:230px;top:477px;font-size:12px;letter-spacing:-0.42px">to:</div>
<div style="position:absolute;left:250px;top:474px;width:130px;height:20px;border:1px solid #707070;border-radius:3px;background:linear-gradient(#f2f2f2,#ebebeb 50%,#dddddd 51%,#cfcfcf);box-sizing:border-box;"></div>
<div class="t" style="left:254px;top:477px;font-size:12px;letter-spacing:-0.42px">End Of Data</div>
<svg style="position:absolute;left:367px;top:481px" width="9" height="6"><path d="M0 0 H8 L4 5 Z" fill="#000"/></svg>
<div style="position:absolute;left:385px;top:474px;width:52px;height:21px;border:1px solid #707070;border-radius:3px;background:linear-gradient(#f2f2f2,#ebebeb 50%,#dddddd 51%,#cfcfcf);box-sizing:border-box;"></div>
<div class="t" style="left:388px;top:477px;font-size:12px;letter-spacing:-0.42px">Compute</div>
<div style="position:absolute;left:453px;top:471px;width:26px;height:26px;border:1px solid #707070;border-radius:3px;background:linear-gradient(#f2f2f2,#ebebeb 50%,#dddddd 51%,#cfcfcf);box-sizing:border-box;"></div>
<svg style="position:absolute;left:458px;top:476px" width="16" height="16"><path d="M2 1 V15 M14 1 L5 8 L14 15 Z" stroke="#3a8ad0" stroke-width="2" fill="#6ab0e8"/></svg>
<div style="position:absolute;left:481px;top:471px;width:51px;height:26px;border:1px solid #707070;border-radius:3px;background:linear-gradient(#f2f2f2,#ebebeb 50%,#dddddd 51%,#cfcfcf);box-sizing:border-box;"></div>
<svg style="position:absolute;left:485px;top:474px" width="20" height="20"><path d="M3 18 Q3 8 13 7 L13 3 L19 9 L13 15 L13 11 Q6 11 3 18 Z" fill="#2a7ab8"/></svg>
<div class="t" style="left:510px;top:478px;font-size:12px;letter-spacing:-0.42px">Go</div>
<div style="position:absolute;left:536px;top:472px;width:59px;height:24px;background:#fff"></div>
<div class="t" style="left:585px;top:477px;font-size:12px;letter-spacing:-0.42px">1</div>
<div style="position:absolute;left:595px;top:472px;width:14px;height:24px;border:1px solid #707070;border-radius:3px;background:linear-gradient(#f2f2f2,#ebebeb 50%,#dddddd 51%,#cfcfcf);box-sizing:border-box;"></div>
<div style="position:absolute;left:598px;top:483px;width:8px;height:2px;background:#3a80c8"></div>
<div style="position:absolute;left:609px;top:472px;width:14px;height:24px;border:1px solid #707070;border-radius:3px;background:linear-gradient(#f2f2f2,#ebebeb 50%,#dddddd 51%,#cfcfcf);box-sizing:border-box;"></div>
<div style="position:absolute;left:612px;top:483px;width:8px;height:2px;background:#3a80c8"></div>
<div style="position:absolute;left:615px;top:479px;width:2px;height:9px;background:#3a80c8"></div>
<div class="t" style="left:627px;top:477px;font-size:12px;letter-spacing:-0.6px">out of 0 events</div>
<div style="position:absolute;left:700px;top:471px;width:27px;height:26px;border:1px solid #707070;border-radius:3px;background:linear-gradient(#f2f2f2,#ebebeb 50%,#dddddd 51%,#cfcfcf);box-sizing:border-box;"></div>
<svg style="position:absolute;left:705px;top:476px" width="16" height="16"><path d="M14 1 V15 M2 1 L11 8 L2 15 Z" stroke="#3a8ad0" stroke-width="2" fill="#6ab0e8"/></svg>
<div style="position:absolute;left:24px;top:506px;width:357px;height:832px;background:#fff;overflow:hidden"></div>
<div style="position:absolute;left:24px;top:506px;width:357px;height:19px;background:linear-gradient(#ffffff,#f4f4f4 50%,#e6e6e6);border-bottom:2px solid #606060;box-sizing:border-box"></div>
<div style="position:absolute;left:179px;top:507px;width:1px;height:17px;background:#c8c8c8"></div>
<div style="position:absolute;left:335px;top:507px;width:1px;height:17px;background:#c8c8c8"></div>
<div class="t" style="left:24px;top:508px;font-size:12px;letter-spacing:-0.42px;width:155px;text-align:center">PCIe-101:Up</div>
<div class="t" style="left:179px;top:508px;font-size:12px;letter-spacing:-0.42px;width:156px;text-align:center">PCIe-101:Down</div>
<svg style="position:absolute;left:384px;top:507px" width="10" height="16"><path d="M2 6 L5 2 L8 6 Z M2 10 L5 14 L8 10 Z" fill="#8a8a8a"/></svg>
<div style="position:absolute;left:0;top:0;width:381px;height:1338px;overflow:hidden"><div style="position:absolute;left:24px;top:526px;width:120px;height:40px;background:#ffff00;border:1px solid #000;box-sizing:border-box"></div><div class="t" style="left:24px;top:538px;font-size:12px;letter-spacing:-0.42px;width:120px;text-align:center;line-height:16px">Polling</div><div style="position:absolute;left:24px;top:566px;width:120px;height:20px;background:#00ffff;border:1px solid #000;box-sizing:border-box"></div><div class="t" style="left:24px;top:568px;font-size:12px;letter-spacing:-0.42px;width:120px;text-align:center;line-height:16px">Config.LW.Start</div><div style="position:absolute;left:24px;top:586px;width:120px;height:40px;background:#00ffff;border:1px solid #000;box-sizing:border-box"></div><div class="t" style="left:24px;top:598px;font-size:12px;letter-spacing:-0.42px;width:120px;text-align:center;line-height:16px">Config.LW.Accept</div><div style="position:absolute;left:24px;top:626px;width:120px;height:20px;background:#00ffff;border:1px solid #000;box-sizing:border-box"></div><div class="t" style="left:24px;top:628px;font-size:12px;letter-spacing:-0.42px;width:120px;text-align:center;line-height:16px">Config.LN.Wait</div><div style="position:absolute;left:24px;top:646px;width:120px;height:20px;background:#00ffff;border:1px solid #000;box-sizing:border-box"></div><div class="t" style="left:24px;top:648px;font-size:12px;letter-spacing:-0.42px;width:120px;text-align:center;line-height:16px">Config.LN.Accept</div><div style="position:absolute;left:24px;top:666px;width:120px;height:40px;background:#00ffff;border:1px solid #000;box-sizing:border-box"></div><div class="t" style="left:24px;top:678px;font-size:12px;letter-spacing:-0.42px;width:120px;text-align:center;line-height:16px">Config.Complete</div><div style="position:absolute;left:24px;top:706px;width:120px;height:20px;background:#00ffff;border:1px solid #000;box-sizing:border-box"></div><div class="t" style="left:24px;top:708px;font-size:12px;letter-spacing:-0.42px;width:120px;text-align:center;line-height:16px">Config.Idle</div><div style="position:absolute;left:24px;top:726px;width:120px;height:40px;background:#98fb98;border:1px solid #000;box-sizing:border-box"></div><div class="t" style="left:24px;top:738px;font-size:12px;letter-spacing:-0.42px;width:120px;text-align:center;line-height:16px">L0</div><div style="position:absolute;left:24px;top:766px;width:120px;height:20px;background:#eee8aa;border:1px solid #000;box-sizing:border-box"></div><div class="t" style="left:24px;top:768px;font-size:12px;letter-spacing:-0.42px;width:120px;text-align:center;line-height:16px">Rcvr.RcvrLock</div><div style="position:absolute;left:24px;top:786px;width:120px;height:20px;background:#eee8aa;border:1px solid #000;box-sizing:border-box"></div><div class="t" style="left:24px;top:788px;font-size:12px;letter-spacing:-0.42px;width:120px;text-align:center;line-height:16px">Rcvr.RcvrCfg</div><div style="position:absolute;left:24px;top:806px;width:120px;height:20px;background:#eee8aa;border:1px solid #000;box-sizing:border-box"></div><div class="t" style="left:24px;top:808px;font-size:12px;letter-spacing:-0.42px;width:120px;text-align:center;line-height:16px">Rcvr.Speed</div><div style="position:absolute;left:24px;top:826px;width:120px;height:20px;background:#eee8aa;border:1px solid #000;box-sizing:border-box"></div><div class="t" style="left:24px;top:828px;font-size:12px;letter-spacing:-0.42px;width:120px;text-align:center;line-height:16px">Rcvr.RcvrLock</div><div style="position:absolute;left:24px;top:846px;width:120px;height:40px;background:#eee8aa;border:1px solid #000;box-sizing:border-box"></div><div class="t" style="left:24px;top:858px;font-size:12px;letter-spacing:-0.42px;width:120px;text-align:center;line-height:16px">Rcvr.Speed</div><div style="position:absolute;left:24px;top:886px;width:120px;height:20px;background:#eee8aa;border:1px solid #000;box-sizing:border-box"></div><div class="t" style="left:24px;top:888px;font-size:12px;letter-spacing:-0.42px;width:120px;text-align:center;line-height:16px">Rcvr.RcvrLock</div><div style="position:absolute;left:24px;top:906px;width:120px;height:80px;background:#eee8aa;border:1px solid #000;box-sizing:border-box"></div><div class="t" style="left:24px;top:938px;font-size:12px;letter-spacing:-0.42px;width:120px;text-align:center;line-height:16px">Rcvr.RcvrCfg</div><div style="position:absolute;left:24px;top:986px;width:120px;height:20px;background:#eee8aa;border:1px solid #000;box-sizing:border-box"></div><div class="t" style="left:24px;top:988px;font-size:12px;letter-spacing:-0.42px;width:120px;text-align:center;line-height:16px">Rcvr.Idle</div><div style="position:absolute;left:24px;top:1006px;width:120px;height:20px;background:#98fb98;border:1px solid #000;box-sizing:border-box"></div><div class="t" style="left:24px;top:1008px;font-size:12px;letter-spacing:-0.42px;width:120px;text-align:center;line-height:16px">L0</div><div style="position:absolute;left:24px;top:1026px;width:120px;height:40px;background:#eee8aa;border:1px solid #000;box-sizing:border-box"></div><div class="t" style="left:24px;top:1038px;font-size:12px;letter-spacing:-0.42px;width:120px;text-align:center;line-height:16px">Rcvr.RcvrLock</div><div style="position:absolute;left:24px;top:1066px;width:120px;height:40px;background:#eee8aa;border:1px solid #000;box-sizing:border-box"></div><div class="t" style="left:24px;top:1078px;font-size:12px;letter-spacing:-0.42px;width:120px;text-align:center;line-height:16px">Rcvr.RcvrCfg</div><div style="position:absolute;left:24px;top:1106px;width:120px;height:20px;background:#eee8aa;border:1px solid #000;box-sizing:border-box"></div><div class="t" style="left:24px;top:1108px;font-size:12px;letter-spacing:-0.42px;width:120px;text-align:center;line-height:16px">Rcvr.Idle</div><div style="position:absolute;left:24px;top:1126px;width:120px;height:20px;background:#98fb98;border:1px solid #000;box-sizing:border-box"></div><div class="t" style="left:24px;top:1128px;font-size:12px;letter-spacing:-0.42px;width:120px;text-align:center;line-height:16px">L0</div><div style="position:absolute;left:24px;top:1146px;width:120px;height:20px;background:#eee8aa;border:1px solid #000;box-sizing:border-box"></div><div class="t" style="left:24px;top:1148px;font-size:12px;letter-spacing:-0.42px;width:120px;text-align:center;line-height:16px">Rcvr.RcvrLock</div><div style="position:absolute;left:24px;top:1166px;width:120px;height:60px;background:#eee8aa;border:1px solid #000;box-sizing:border-box"></div><div class="t" style="left:24px;top:1188px;font-size:12px;letter-spacing:-0.42px;width:120px;text-align:center;line-height:16px">Rcvr.RcvrCfg</div><div style="position:absolute;left:24px;top:1226px;width:120px;height:20px;background:#eee8aa;border:1px solid #000;box-sizing:border-box"></div><div class="t" style="left:24px;top:1228px;font-size:12px;letter-spacing:-0.42px;width:120px;text-align:center;line-height:16px">Rcvr.Idle</div><div style="position:absolute;left:24px;top:1246px;width:120px;height:20px;background:#98fb98;border:1px solid #000;box-sizing:border-box"></div><div class="t" style="left:24px;top:1248px;font-size:12px;letter-spacing:-0.42px;width:120px;text-align:center;line-height:16px">L0</div><div style="position:absolute;left:24px;top:1266px;width:120px;height:20px;background:#eee8aa;border:1px solid #000;box-sizing:border-box"></div><div class="t" style="left:24px;top:1268px;font-size:12px;letter-spacing:-0.42px;width:120px;text-align:center;line-height:16px">Rcvr.RcvrLock</div><div style="position:absolute;left:24px;top:1286px;width:120px;height:52px;background:#eee8aa;border:1px solid #000;box-sizing:border-box;border-bottom:none"></div><div class="t" style="left:24px;top:1308px;font-size:12px;letter-spacing:-0.42px;width:120px;text-align:center;line-height:16px">Rcvr.RcvrCfg</div><div style="position:absolute;left:179px;top:536px;width:120px;height:20px;background:#ffff00;border:1px solid #000;box-sizing:border-box"></div><div class="t" style="left:179px;top:538px;font-size:12px;letter-spacing:-0.42px;width:120px;text-align:center;line-height:16px">Polling</div><div style="position:absolute;left:179px;top:556px;width:120px;height:20px;background:#00ffff;border:1px solid #000;box-sizing:border-box"></div><div class="t" style="left:179px;top:558px;font-size:12px;letter-spacing:-0.42px;width:120px;text-align:center;line-height:16px">Config.LW.Start</div><div style="position:absolute;left:179px;top:576px;width:120px;height:20px;background:#00ffff;border:1px solid #000;box-sizing:border-box"></div><div class="t" style="left:179px;top:578px;font-size:12px;letter-spacing:-0.42px;width:120px;text-align:center;line-height:16px">Config.LW.Accept</div><div style="position:absolute;left:179px;top:596px;width:120px;height:20px;background:#00ffff;border:1px solid #000;box-sizing:border-box"></div><div class="t" style="left:179px;top:598px;font-size:12px;letter-spacing:-0.42px;width:120px;text-align:center;line-height:16px">Config.LN.Wait</div><div style="position:absolute;left:179px;top:616px;width:120px;height:40px;background:#00ffff;border:1px solid #000;box-sizing:border-box"></div><div class="t" style="left:179px;top:628px;font-size:12px;letter-spacing:-0.42px;width:120px;text-align:center;line-height:16px">Config.LN.Accept</div><div style="position:absolute;left:179px;top:656px;width:120px;height:20px;background:#00ffff;border:1px solid #000;box-sizing:border-box"></div><div class="t" style="left:179px;top:658px;font-size:12px;letter-spacing:-0.42px;width:120px;text-align:center;line-height:16px">Config.Complete</div><div style="position:absolute;left:179px;top:676px;width:120px;height:20px;background:#00ffff;border:1px solid #000;box-sizing:border-box"></div><div class="t" style="left:179px;top:678px;font-size:12px;letter-spacing:-0.42px;width:120px;text-align:center;line-height:16px">Config.Idle</div><div style="position:absolute;left:179px;top:696px;width:120px;height:40px;background:#98fb98;border:1px solid #000;box-sizing:border-box"></div><div class="t" style="left:179px;top:708px;font-size:12px;letter-spacing:-0.42px;width:120px;text-align:center;line-height:16px">L0</div><div style="position:absolute;left:179px;top:736px;width:120px;height:20px;background:#eee8aa;border:1px solid #000;box-sizing:border-box"></div><div class="t" style="left:179px;top:738px;font-size:12px;letter-spacing:-0.42px;width:120px;text-align:center;line-height:16px">Rcvr.RcvrLock</div><div style="position:absolute;left:179px;top:756px;width:120px;height:100px;background:#eee8aa;border:1px solid #000;box-sizing:border-box"></div><div class="t" style="left:179px;top:798px;font-size:12px;letter-spacing:-0.42px;width:120px;text-align:center;line-height:16px">Rcvr.Speed</div><div style="position:absolute;left:179px;top:856px;width:120px;height:20px;background:#eee8aa;border:1px solid #000;box-sizing:border-box"></div><div class="t" style="left:179px;top:858px;font-size:12px;letter-spacing:-0.42px;width:120px;text-align:center;line-height:16px">Rcvr.RcvrLock</div><div style="position:absolute;left:179px;top:876px;width:120px;height:40px;background:#eee8aa;border:1px solid #000;box-sizing:border-box"></div><div class="t" style="left:179px;top:888px;font-size:12px;letter-spacing:-0.42px;width:120px;text-align:center;line-height:16px">Rcvr.Speed</div><div style="position:absolute;left:179px;top:916px;width:120px;height:20px;background:#eee8aa;border:1px solid #000;box-sizing:border-box"></div><div class="t" style="left:179px;top:918px;font-size:12px;letter-spacing:-0.42px;width:120px;text-align:center;line-height:16px">Rcvr.RcvrLock</div><div style="position:absolute;left:179px;top:936px;width:120px;height:20px;background:#eee8aa;border:1px solid #000;box-sizing:border-box"></div><div class="t" style="left:179px;top:938px;font-size:12px;letter-spacing:-0.42px;width:120px;text-align:center;line-height:16px">Rcvr.RcvrCfg</div><div style="position:absolute;left:179px;top:956px;width:120px;height:20px;background:#eee8aa;border:1px solid #000;box-sizing:border-box"></div><div class="t" style="left:179px;top:958px;font-size:12px;letter-spacing:-0.42px;width:120px;text-align:center;line-height:16px">Rcvr.Idle</div><div style="position:absolute;left:179px;top:976px;width:120px;height:60px;background:#98fb98;border:1px solid #000;box-sizing:border-box"></div><div class="t" style="left:179px;top:998px;font-size:12px;letter-spacing:-0.42px;width:120px;text-align:center;line-height:16px">L0</div><div style="position:absolute;left:179px;top:1036px;width:120px;height:20px;background:#eee8aa;border:1px solid #000;box-sizing:border-box"></div><div class="t" style="left:179px;top:1038px;font-size:12px;letter-spacing:-0.42px;width:120px;text-align:center;line-height:16px">Rcvr.RcvrLock</div><div style="position:absolute;left:179px;top:1056px;width:120px;height:20px;background:#eee8aa;border:1px solid #000;box-sizing:border-box"></div><div class="t" style="left:179px;top:1058px;font-size:12px;letter-spacing:-0.42px;width:120px;text-align:center;line-height:16px">Rcvr.RcvrCfg</div><div style="position:absolute;left:179px;top:1076px;width:120px;height:20px;background:#eee8aa;border:1px solid #000;box-sizing:border-box"></div><div class="t" style="left:179px;top:1078px;font-size:12px;letter-spacing:-0.42px;width:120px;text-align:center;line-height:16px">Rcvr.Idle</div><div style="position:absolute;left:179px;top:1096px;width:120px;height:40px;background:#98fb98;border:1px solid #000;box-sizing:border-box"></div><div class="t" style="left:179px;top:1108px;font-size:12px;letter-spacing:-0.42px;width:120px;text-align:center;line-height:16px">L0</div><div style="position:absolute;left:179px;top:1136px;width:120px;height:40px;background:#eee8aa;border:1px solid #000;box-sizing:border-box"></div><div class="t" style="left:179px;top:1148px;font-size:12px;letter-spacing:-0.42px;width:120px;text-align:center;line-height:16px">Rcvr.RcvrLock</div><div style="position:absolute;left:179px;top:1176px;width:120px;height:20px;background:#eee8aa;border:1px solid #000;box-sizing:border-box"></div><div class="t" style="left:179px;top:1178px;font-size:12px;letter-spacing:-0.42px;width:120px;text-align:center;line-height:16px">Rcvr.RcvrCfg</div><div style="position:absolute;left:179px;top:1196px;width:120px;height:20px;background:#eee8aa;border:1px solid #000;box-sizing:border-box"></div><div class="t" style="left:179px;top:1198px;font-size:12px;letter-spacing:-0.42px;width:120px;text-align:center;line-height:16px">Rcvr.Idle</div><div style="position:absolute;left:179px;top:1216px;width:120px;height:40px;background:#98fb98;border:1px solid #000;box-sizing:border-box"></div><div class="t" style="left:179px;top:1228px;font-size:12px;letter-spacing:-0.42px;width:120px;text-align:center;line-height:16px">L0</div><div style="position:absolute;left:179px;top:1256px;width:120px;height:40px;background:#eee8aa;border:1px solid #000;box-sizing:border-box"></div><div class="t" style="left:179px;top:1268px;font-size:12px;letter-spacing:-0.42px;width:120px;text-align:center;line-height:16px">Rcvr.RcvrLock</div><div style="position:absolute;left:179px;top:1296px;width:120px;height:20px;background:#eee8aa;border:1px solid #000;box-sizing:border-box"></div><div class="t" style="left:179px;top:1298px;font-size:12px;letter-spacing:-0.42px;width:120px;text-align:center;line-height:16px">Rcvr.RcvrCfg</div><div style="position:absolute;left:179px;top:1316px;width:120px;height:20px;background:#eee8aa;border:1px solid #000;box-sizing:border-box"></div><div class="t" style="left:179px;top:1318px;font-size:12px;letter-spacing:-0.42px;width:120px;text-align:center;line-height:16px">Rcvr.Idle</div><div style="position:absolute;left:144px;top:526px;width:35px;height:300px;background:#ffd700;border:1px solid #000;box-sizing:border-box"></div><div style="position:absolute;left:144px;top:826px;width:35px;height:520px;background:#00ff00;border:1px solid #000;border-bottom:none;box-sizing:border-box"></div><div style="position:absolute;left:299px;top:536px;width:35px;height:320px;background:#ffd700;border:1px solid #000;box-sizing:border-box"></div><div style="position:absolute;left:299px;top:856px;width:35px;height:490px;background:#00ff00;border:1px solid #000;border-bottom:none;box-sizing:border-box"></div><div class="t" style="left:144px;top:670px;font-size:12px;letter-spacing:-0.42px;width:35px;text-align:center">Gen1</div><div class="t" style="left:144px;top:1099px;font-size:12px;letter-spacing:-0.42px;width:35px;text-align:center">Gen2</div><div class="t" style="left:299px;top:690px;font-size:12px;letter-spacing:-0.42px;width:35px;text-align:center">Gen1</div><div class="t" style="left:299px;top:1099px;font-size:12px;letter-spacing:-0.42px;width:35px;text-align:center">Gen2</div></div>
<div style="position:absolute;left:381px;top:525px;width:17px;height:813px;background:#ececec"></div>
<svg style="position:absolute;left:384px;top:530px" width="10" height="6"><path d="M1 5 L5 1 L9 5 Z" fill="#7a7a7a"/></svg>
<div style="position:absolute;left:382px;top:544px;width:15px;height:731px;border:1px solid #a8a8a8;border-radius:2px;background:linear-gradient(90deg,#f4f4f4,#dcdcdc 50%,#cfcfcf 51%,#d8d8d8);box-sizing:border-box"></div>
<svg style="position:absolute;left:384px;top:1325px" width="10" height="6"><path d="M1 1 L5 5 L9 1 Z" fill="#7a7a7a"/></svg>
<div style="position:absolute;left:398px;top:506px;width:5px;height:832px;background:#f8f8f8;border-left:1px solid #8a8a8a;border-right:1px solid #8a8a8a;box-sizing:border-box"></div>
<div style="position:absolute;left:399px;top:903px;width:4px;height:12px;background:repeating-linear-gradient(#888 0 1px,transparent 1px 3px)"></div>
<div style="position:absolute;left:403px;top:506px;width:398px;height:832px;background:#fff"></div>
<div style="position:absolute;left:404px;top:506px;width:397px;height:20px;background:linear-gradient(#fdfdfd,#f2f2f2 50%,#e8e8e8);border-bottom:1px solid #d8d8d8;box-sizing:border-box"></div>
<div style="position:absolute;left:598px;top:507px;width:1px;height:18px;background:#dcdcdc"></div>
<div style="position:absolute;left:688px;top:507px;width:1px;height:18px;background:#dcdcdc"></div>
<div style="position:absolute;left:792px;top:507px;width:1px;height:18px;background:#dcdcdc"></div>
<div class="t" style="left:409px;top:507px;font-size:12px;letter-spacing:-0.42px">Transitions</div>
<div class="t" style="left:605px;top:507px;font-size:12px;letter-spacing:-0.42px">PCIe-101:Up</div>
<div class="t" style="left:695px;top:507px;font-size:12px;letter-spacing:-0.42px">PCIe-101:Down</div>
<div class="t" style="left:797px;top:507px;font-size:12px;letter-spacing:-0.42px">T</div>
<div class="t" style="left:409px;top:528.5px;font-size:12px;letter-spacing:-0.42px">Start of Trace -> Polling</div>
<div class="t" style="left:598px;top:528.5px;width:85px;text-align:right;font-size:12px;letter-spacing:-0.42px">1</div>
<div class="t" style="left:688px;top:528.5px;width:99px;text-align:right;font-size:12px;letter-spacing:-0.42px">1</div>
<div style="position:absolute;left:405px;top:546.4px;width:394px;height:20px;background:#f4f7f8;border-radius:3px"></div>
<div class="t" style="left:409px;top:548.9px;font-size:12px;letter-spacing:-0.42px">Polling -> Config.LW.Start</div>
<div class="t" style="left:598px;top:548.9px;width:85px;text-align:right;font-size:12px;letter-spacing:-0.42px">1</div>
<div class="t" style="left:688px;top:548.9px;width:99px;text-align:right;font-size:12px;letter-spacing:-0.42px">1</div>
<div class="t" style="left:409px;top:569.3px;font-size:12px;letter-spacing:-0.42px">Config.LW.Start -> Config.LW.Accept</div>
<div class="t" style="left:598px;top:569.3px;width:85px;text-align:right;font-size:12px;letter-spacing:-0.42px">1</div>
<div class="t" style="left:688px;top:569.3px;width:99px;text-align:right;font-size:12px;letter-spacing:-0.42px">1</div>
<div style="position:absolute;left:405px;top:587.2px;width:394px;height:20px;background:#f4f7f8;border-radius:3px"></div>
<div class="t" style="left:409px;top:589.7px;font-size:12px;letter-spacing:-0.42px">Config.LW.Accept -> Config.LN.Wait</div>
<div class="t" style="left:598px;top:589.7px;width:85px;text-align:right;font-size:12px;letter-spacing:-0.42px">1</div>
<div class="t" style="left:688px;top:589.7px;width:99px;text-align:right;font-size:12px;letter-spacing:-0.42px">1</div>
<div class="t" style="left:409px;top:610.1px;font-size:12px;letter-spacing:-0.42px">Config.LN.Wait -> Config.LN.Accept</div>
<div class="t" style="left:598px;top:610.1px;width:85px;text-align:right;font-size:12px;letter-spacing:-0.42px">1</div>
<div class="t" style="left:688px;top:610.1px;width:99px;text-align:right;font-size:12px;letter-spacing:-0.42px">1</div>
<div style="position:absolute;left:405px;top:628.0px;width:394px;height:20px;background:#f4f7f8;border-radius:3px"></div>
<div class="t" style="left:409px;top:630.5px;font-size:12px;letter-spacing:-0.42px">Config.LN.Accept -> Config.Complete</div>
<div class="t" style="left:598px;top:630.5px;width:85px;text-align:right;font-size:12px;letter-spacing:-0.42px">1</div>
<div class="t" style="left:688px;top:630.5px;width:99px;text-align:right;font-size:12px;letter-spacing:-0.42px">1</div>
<div class="t" style="left:409px;top:650.9px;font-size:12px;letter-spacing:-0.42px">Config.Complete -> Config.Idle</div>
<div class="t" style="left:598px;top:650.9px;width:85px;text-align:right;font-size:12px;letter-spacing:-0.42px">1</div>
<div class="t" style="left:688px;top:650.9px;width:99px;text-align:right;font-size:12px;letter-spacing:-0.42px">1</div>
<div style="position:absolute;left:405px;top:668.8px;width:394px;height:20px;background:#f4f7f8;border-radius:3px"></div>
<div class="t" style="left:409px;top:671.3px;font-size:12px;letter-spacing:-0.42px">Config.Idle -> L0</div>
<div class="t" style="left:598px;top:671.3px;width:85px;text-align:right;font-size:12px;letter-spacing:-0.42px">1</div>
<div class="t" style="left:688px;top:671.3px;width:99px;text-align:right;font-size:12px;letter-spacing:-0.42px">1</div>
<div class="t" style="left:409px;top:691.7px;font-size:12px;letter-spacing:-0.42px">L0 -> Rcvr.RcvrLock</div>
<div class="t" style="left:598px;top:691.7px;width:85px;text-align:right;font-size:12px;letter-spacing:-0.42px">4</div>
<div class="t" style="left:688px;top:691.7px;width:99px;text-align:right;font-size:12px;letter-spacing:-0.42px">4</div>
<div style="position:absolute;left:405px;top:709.6px;width:394px;height:20px;background:#f4f7f8;border-radius:3px"></div>
<div class="t" style="left:409px;top:712.1px;font-size:12px;letter-spacing:-0.42px">Rcvr.RcvrLock -> Rcvr.RcvrCfg</div>
<div class="t" style="left:598px;top:712.1px;width:85px;text-align:right;font-size:12px;letter-spacing:-0.42px">5</div>
<div class="t" style="left:688px;top:712.1px;width:99px;text-align:right;font-size:12px;letter-spacing:-0.42px">4</div>
<div class="t" style="left:409px;top:732.5px;font-size:12px;letter-spacing:-0.42px">Rcvr.RcvrCfg -> Rcvr.Speed</div>
<div class="t" style="left:598px;top:732.5px;width:85px;text-align:right;font-size:12px;letter-spacing:-0.42px">1</div>
<div class="t" style="left:688px;top:732.5px;width:99px;text-align:right;font-size:12px;letter-spacing:-0.42px">0</div>
<div style="position:absolute;left:405px;top:750.4px;width:394px;height:20px;background:#f4f7f8;border-radius:3px"></div>
<div class="t" style="left:409px;top:752.9px;font-size:12px;letter-spacing:-0.42px">Rcvr.Speed -> Rcvr.RcvrLock</div>
<div class="t" style="left:598px;top:752.9px;width:85px;text-align:right;font-size:12px;letter-spacing:-0.42px">2</div>
<div class="t" style="left:688px;top:752.9px;width:99px;text-align:right;font-size:12px;letter-spacing:-0.42px">2</div>
<div class="t" style="left:409px;top:773.3px;font-size:12px;letter-spacing:-0.42px">Rcvr.RcvrLock -> Rcvr.Speed</div>
<div class="t" style="left:598px;top:773.3px;width:85px;text-align:right;font-size:12px;letter-spacing:-0.42px">1</div>
<div class="t" style="left:688px;top:773.3px;width:99px;text-align:right;font-size:12px;letter-spacing:-0.42px">2</div>
<div style="position:absolute;left:405px;top:791.2px;width:394px;height:20px;background:#f4f7f8;border-radius:3px"></div>
<div class="t" style="left:409px;top:793.7px;font-size:12px;letter-spacing:-0.42px">Rcvr.RcvrCfg -> Rcvr.Idle</div>
<div class="t" style="left:598px;top:793.7px;width:85px;text-align:right;font-size:12px;letter-spacing:-0.42px">4</div>
<div class="t" style="left:688px;top:793.7px;width:99px;text-align:right;font-size:12px;letter-spacing:-0.42px">4</div>
<div class="t" style="left:409px;top:814.1px;font-size:12px;letter-spacing:-0.42px">Rcvr.Idle -> L0</div>
<div class="t" style="left:598px;top:814.1px;width:85px;text-align:right;font-size:12px;letter-spacing:-0.42px">4</div>
<div class="t" style="left:688px;top:814.1px;width:99px;text-align:right;font-size:12px;letter-spacing:-0.42px">4</div>
<div style="position:absolute;left:598px;top:526px;width:1px;height:306px;background:#eef0f2"></div>
<div style="position:absolute;left:688px;top:526px;width:1px;height:306px;background:#eef0f2"></div>
<div style="position:absolute;left:800px;top:506px;width:3px;height:820px;border-left:1px solid #a0a0a0;border-right:1px solid #808080;box-sizing:border-box;background:#f0f0f0"></div>
<div style="position:absolute;left:404px;top:1321px;width:399px;height:17px;background:#ececec"></div>
<svg style="position:absolute;left:408px;top:1325px" width="6" height="10"><path d="M5 1 L1 5 L5 9 Z" fill="#7a7a7a"/></svg>
<div style="position:absolute;left:420px;top:1322px;width:332px;height:15px;border:1px solid #a8a8a8;border-radius:2px;background:linear-gradient(#f4f4f4,#dcdcdc 50%,#cfcfcf 51%,#d8d8d8);box-sizing:border-box"></div>
<div style="position:absolute;left:583px;top:1326px;width:6px;height:7px;background:repeating-linear-gradient(90deg,#666 0 1px,transparent 1px 2px)"></div>
<svg style="position:absolute;left:790px;top:1325px" width="6" height="10"><path d="M1 1 L5 5 L1 9 Z" fill="#7a7a7a"/></svg>
<div style="position:absolute;left:803px;top:506px;width:5px;height:832px;background:#f0f0f0;border-left:1px solid #909090;border-right:1px solid #909090;box-sizing:border-box"></div>
<div style="position:absolute;left:804px;top:913px;width:3px;height:12px;background:repeating-linear-gradient(#888 0 1px,transparent 1px 3px)"></div>
<div style="position:absolute;left:808px;top:506px;width:1729px;height:832px;background:#fff"></div>
<svg style="position:absolute;left:0;top:0" width="2560" height="1408" viewBox="0 0 2560 1408"><path d="M1190.5 619.0 L1190.5 650.0" stroke="#7a7a7a" stroke-width="1.9" fill="none"/><path d="M1186.4 650.0 L1190.5 675.0 L1194.6 650.0 Z" fill="#000" stroke="#7a7a7a" stroke-width="1.5" stroke-linejoin="miter"/><path d="M1255.5 672.0 L1255.5 645.5" stroke="#7a7a7a" stroke-width="1.9" fill="none"/><path d="M1259.6 645.5 L1255.5 620.5 L1251.4 645.5 Z" fill="#000" stroke="#7a7a7a" stroke-width="1.5" stroke-linejoin="miter"/><path d="M1225.0 742.0 L1225.0 766.0" stroke="#7a7a7a" stroke-width="1.9" fill="none"/><path d="M1220.9 766.0 L1225.0 791.0 L1229.1 766.0 Z" fill="#000" stroke="#7a7a7a" stroke-width="1.5" stroke-linejoin="miter"/><path d="M1225.0 862.0 L1225.0 886.0" stroke="#7a7a7a" stroke-width="1.9" fill="none"/><path d="M1220.9 886.0 L1225.0 911.0 L1229.1 886.0 Z" fill="#000" stroke="#7a7a7a" stroke-width="1.5" stroke-linejoin="miter"/><path d="M1468.3 686.2 L1349.8 605.8" stroke="#7a7a7a" stroke-width="1.9" fill="none"/><path d="M1352.1 602.4 L1329.1 591.8 L1347.5 609.2 Z" fill="#000" stroke="#7a7a7a" stroke-width="1.5" stroke-linejoin="miter"/><path d="M1461.8 808.0 L1305.6 634.8" stroke="#7a7a7a" stroke-width="1.9" fill="none"/><path d="M1308.7 632.0 L1288.9 616.2 L1302.6 637.5 Z" fill="#000" stroke="#7a7a7a" stroke-width="1.5" stroke-linejoin="miter"/><path d="M1473.5 1030.5 L1326.5 626.7" stroke="#7a7a7a" stroke-width="1.9" fill="none"/><path d="M1330.4 625.3 L1318.0 603.2 L1322.7 628.1 Z" fill="#000" stroke="#7a7a7a" stroke-width="1.5" stroke-linejoin="miter"/><path d="M1308.6 801.0 L1440.8 733.0" stroke="#7a7a7a" stroke-width="1.9" fill="none"/><path d="M1442.6 736.7 L1463.0 721.6 L1438.9 729.4 Z" fill="#000" stroke="#7a7a7a" stroke-width="1.5" stroke-linejoin="miter"/><path d="M1328.0 835.0 L1455.9 907.5" stroke="#7a7a7a" stroke-width="1.9" fill="none"/><path d="M1453.8 911.0 L1477.6 919.8 L1457.9 903.9 Z" fill="#000" stroke="#7a7a7a" stroke-width="1.5" stroke-linejoin="miter"/><path d="M1304.0 851.8 L1419.3 1015.4" stroke="#7a7a7a" stroke-width="1.9" fill="none"/><path d="M1415.9 1017.7 L1433.7 1035.8 L1422.6 1013.0 Z" fill="#000" stroke="#7a7a7a" stroke-width="1.5" stroke-linejoin="miter"/><path d="M1453.0 1035.0 L1334.1 863.9" stroke="#7a7a7a" stroke-width="1.9" fill="none"/><path d="M1337.4 861.6 L1319.8 843.4 L1330.7 866.3 Z" fill="#000" stroke="#7a7a7a" stroke-width="1.5" stroke-linejoin="miter"/><path d="M1324.7 960.0 L1391.2 1025.3" stroke="#7a7a7a" stroke-width="1.9" fill="none"/><path d="M1388.3 1028.2 L1409.0 1042.8 L1394.0 1022.4 Z" fill="#000" stroke="#7a7a7a" stroke-width="1.5" stroke-linejoin="miter"/><path d="M1131.0 947.0 L1092.8 951.9" stroke="#7a7a7a" stroke-width="1.9" fill="none"/><path d="M1092.3 947.8 L1068.0 955.0 L1093.3 955.9 Z" fill="#000" stroke="#7a7a7a" stroke-width="1.5" stroke-linejoin="miter"/><path d="M1149.0 969.7 L1069.3 1038.6" stroke="#7a7a7a" stroke-width="1.9" fill="none"/><path d="M1066.6 1035.5 L1050.4 1055.0 L1072.0 1041.7 Z" fill="#000" stroke="#7a7a7a" stroke-width="1.5" stroke-linejoin="miter"/><path d="M1199.0 978.0 L1199.0 1017.0" stroke="#7a7a7a" stroke-width="1.9" fill="none"/><path d="M1194.9 1017.0 L1199.0 1042.0 L1203.1 1017.0 Z" fill="#000" stroke="#7a7a7a" stroke-width="1.5" stroke-linejoin="miter"/><path d="M1258.6 1042.0 L1258.6 1003.0" stroke="#7a7a7a" stroke-width="1.9" fill="none"/><path d="M1262.7 1003.0 L1258.6 978.0 L1254.5 1003.0 Z" fill="#000" stroke="#7a7a7a" stroke-width="1.5" stroke-linejoin="miter"/><path d="M1330.0 1080.0 L1364.2 1075.4" stroke="#7a7a7a" stroke-width="1.9" fill="none"/><path d="M1364.8 1079.4 L1389.0 1072.0 L1363.7 1071.3 Z" fill="#000" stroke="#7a7a7a" stroke-width="1.5" stroke-linejoin="miter"/><path d="M1491.7 1032.0 L1498.1 999.5" stroke="#7a7a7a" stroke-width="1.9" fill="none"/><path d="M1502.2 1000.3 L1503.0 975.0 L1494.1 998.7 Z" fill="#000" stroke="#7a7a7a" stroke-width="1.5" stroke-linejoin="miter"/><path d="M1393.0 1051.6 L1325.0 986.3" stroke="#7a7a7a" stroke-width="1.9" fill="none"/><path d="M1327.3 980.0 L1306.0 967.5 L1319.2 988.4 Z" fill="#ffff00" stroke="#808080" stroke-width="3" stroke-linejoin="miter"/><path d="M943.5 920.7 C911.3 792.3 965.6 626.7 1106.0 593.0" stroke="#7a7a7a" stroke-width="1.9" fill="none"/><path d="M1106.6 597.1 L1130.9 589.2 L1105.4 588.9 Z" fill="#000" stroke="#7a7a7a" stroke-width="1.5" stroke-linejoin="miter"/><path d="M1131.9 826.0 C1127.0 824.9 1112.0 823.6 1102.2 819.3 C1092.5 815.0 1081.1 808.1 1073.4 800.1 C1065.7 792.1 1059.4 780.9 1056.1 771.3 C1052.8 761.7 1052.6 753.8 1053.3 742.6 C1054.0 731.4 1056.7 716.0 1060.0 704.2 C1063.3 692.4 1068.0 681.2 1073.4 671.6 C1078.8 662.0 1084.0 655.8 1092.6 646.7 C1101.2 637.6 1119.8 622.0 1125.2 617.0" stroke="#7a7a7a" stroke-width="1.9" fill="none"/><path d="M1127.4 620.4 L1144.4 604.5 L1123.0 613.6 Z" fill="#000" stroke="#7a7a7a" stroke-width="1.5" stroke-linejoin="miter"/><path d="M1641.0 927.3 C1646.4 920.7 1663.4 901.7 1673.6 887.5 C1683.8 873.3 1694.9 856.7 1702.0 842.0 C1709.1 827.3 1713.6 811.2 1716.2 799.4 C1718.9 787.6 1718.9 781.5 1717.7 771.0 C1716.5 760.5 1714.1 747.4 1709.2 736.2 C1704.3 725.1 1697.2 714.2 1688.4 704.1 C1679.6 694.0 1669.7 684.9 1656.3 675.3 C1642.9 665.7 1627.0 655.6 1608.3 646.5 C1589.6 637.4 1565.5 628.4 1544.2 620.9 C1522.9 613.4 1501.6 606.8 1480.2 601.6 C1458.8 596.4 1437.5 593.1 1416.1 589.6 C1394.7 586.1 1362.7 582.3 1352.0 580.8" stroke="#7a7a7a" stroke-width="1.9" fill="none"/><path d="M1352.3 576.7 L1328.0 578.9 L1351.7 584.9 Z" fill="#000" stroke="#7a7a7a" stroke-width="1.5" stroke-linejoin="miter"/><path d="M1585.6 1073.6 C1744.2 1046.9 1752.9 834.5 1659.4 735.5" stroke="#7a7a7a" stroke-width="1.9" fill="none"/><path d="M1661.9 732.2 L1642.4 722.7 L1656.9 738.8 Z" fill="#000" stroke="#7a7a7a" stroke-width="1.5" stroke-linejoin="miter"/><path d="M1585.6 1060.8 C1679.2 1056.1 1723.3 916.5 1650.9 859.0" stroke="#7a7a7a" stroke-width="1.9" fill="none"/><path d="M1652.9 855.4 L1631.0 847.7 L1648.9 862.6 Z" fill="#000" stroke="#7a7a7a" stroke-width="1.5" stroke-linejoin="miter"/><path d="M1048.0 1101.5 C1166.5 1141.7 1322.8 1214.2 1433.9 1118.7" stroke="#7a7a7a" stroke-width="1.9" fill="none"/><path d="M1436.9 1121.5 L1451.1 1099.8 L1430.9 1115.9 Z" fill="#000" stroke="#7a7a7a" stroke-width="1.5" stroke-linejoin="miter"/><ellipse cx="1230" cy="585" rx="98.5" ry="34" fill="#ffa500" stroke="#7a7a7a" stroke-width="1.7"/><text x="1230" y="592.5" text-anchor="middle" font-family="Liberation Sans" font-size="21.7px" fill="#000">Detect</text><ellipse cx="1230" cy="705" rx="98.5" ry="34" fill="#ffff00" stroke="#7a7a7a" stroke-width="1.7"/><text x="1230" y="712.5" text-anchor="middle" font-family="Liberation Sans" font-size="21.7px" fill="#000">Polling</text><ellipse cx="1230" cy="825" rx="98.5" ry="34" fill="#00ffff" stroke="#7a7a7a" stroke-width="1.7"/><text x="1230" y="832.5" text-anchor="middle" font-family="Liberation Sans" font-size="21.7px" fill="#000">Configuration</text><ellipse cx="1553" cy="705" rx="98.5" ry="34" fill="#ffc0cb" stroke="#7a7a7a" stroke-width="1.7"/><text x="1553" y="712.5" text-anchor="middle" font-family="Liberation Sans" font-size="21.7px" fill="#000">Disabled</text><ellipse cx="1553" cy="825" rx="98.5" ry="34" fill="#ffc0cb" stroke="#7a7a7a" stroke-width="1.7"/><text x="1553" y="832.5" text-anchor="middle" font-family="Liberation Sans" font-size="21.7px" fill="#000">Hot Reset</text><ellipse cx="1553" cy="944" rx="98.5" ry="34" fill="#ffc0cb" stroke="#7a7a7a" stroke-width="1.7"/><text x="1553" y="951.5" text-anchor="middle" font-family="Liberation Sans" font-size="21.7px" fill="#000">Loopback</text><ellipse cx="969" cy="955.5" rx="98.5" ry="34" fill="#ffc0cb" stroke="#7a7a7a" stroke-width="1.7"/><text x="969" y="963.0" text-anchor="middle" font-family="Liberation Sans" font-size="21.7px" fill="#000">L2</text><ellipse cx="969" cy="1076" rx="98.5" ry="34" fill="#ffc0cb" stroke="#7a7a7a" stroke-width="1.7"/><text x="969" y="1083.5" text-anchor="middle" font-family="Liberation Sans" font-size="21.7px" fill="#000">L1</text><ellipse cx="1230" cy="1076" rx="98.5" ry="34" fill="#ffc0cb" stroke="#7a7a7a" stroke-width="1.7"/><text x="1230" y="1083.5" text-anchor="middle" font-family="Liberation Sans" font-size="21.7px" fill="#000">L0s</text><ellipse cx="1487.5" cy="1066" rx="98.5" ry="34" fill="#eee8aa" stroke="#7a7a7a" stroke-width="1.7"/><text x="1487.5" y="1073.5" text-anchor="middle" font-family="Liberation Sans" font-size="21.7px" fill="#000">Recovery</text><ellipse cx="1230.5" cy="944.5" rx="97" ry="32" fill="#98fb98" stroke="#000" stroke-width="4.5"/><text x="1230.5" y="952" text-anchor="middle" font-family="Liberation Sans" font-size="21.7px" fill="#000">L0</text></svg>
<div style="position:absolute;left:0px;top:1354px;width:2560px;height:26px;background:#f0f0f0"></div>
<svg style="position:absolute;left:0;top:1350px" width="320" height="30"><path d="M14 20 L18 24 H150 L151 22" fill="none" stroke="#000" stroke-width="1.3"/><path d="M153 22 L156 26 H291 L293 22 V3" fill="none" stroke="#000" stroke-width="1.6"/></svg>
<div style="position:absolute;left:8px;top:1352px;width:144px;height:1px;background:#000"></div>
<div style="position:absolute;left:293px;top:1352px;width:2260px;height:2px;background:#000"></div>
<div style="position:absolute;left:18px;top:1356px;width:16px;height:16px;background:#c8c8c8;border:1px solid #888;box-sizing:border-box"></div>
<svg style="position:absolute;left:18px;top:1356px" width="16" height="16"><rect x="2" y="3" width="4" height="3" fill="#2030e0"/><rect x="2" y="3" width="2" height="3" fill="#e02020"/><rect x="9" y="3" width="4" height="3" fill="#106010"/><path d="M5 5 L12 12 M6 4 H9" stroke="#333"/><rect x="10" y="10" width="4" height="3" fill="#e02020"/></svg>
<div class="t" style="left:70px;top:1357px;font-size:12px;letter-spacing:-0.5px">Overview</div>
<div style="position:absolute;left:156px;top:1356px;width:16px;height:16px;background:linear-gradient(90deg,transparent 0 4px,#404040 4px 5px,transparent 5px 9px,#404040 9px 10px,transparent 10px),linear-gradient(#40c8f0 0 2px,#404040 2px 3px,#f0f000 3px 4px,#10d010 4px 6px,#f0f000 6px 7px,#10d010 7px 9px,#f0f000 9px 10px,#10d010 10px 12px,#f0f000 12px 13px,#10d010 13px);border:1px solid #404040;box-sizing:border-box"></div>
<div class="t" style="left:192px;top:1358px;font-size:12px;letter-spacing:-0.6px">Protocol Viewer-1</div>
<div style="position:absolute;left:0px;top:1380px;width:2560px;height:1px;background:#a0a0a0"></div>
<div style="position:absolute;left:0px;top:1381px;width:2560px;height:20px;background:#f0eded"></div>
<div class="t" style="left:3px;top:1384px;font-size:12px;letter-spacing:-0.35px">For Help, press F1</div>
<div style="position:absolute;left:2006px;top:1384px;width:57px;height:15px;border:1px solid #707070;border-radius:3px;background:linear-gradient(#f4f4f4,#dedede);box-sizing:border-box"></div>
<div class="t" style="left:2012px;top:1384px;font-size:12px;letter-spacing:-0.4px;line-height:14px">Status...</div>
<div style="position:absolute;left:2418px;top:1383px;width:1px;height:16px;background:#d0d0d0"></div>
<div style="position:absolute;left:2506px;top:1383px;width:1px;height:16px;background:#d0d0d0"></div>
<div class="t" style="left:2520px;top:1384px;font-size:12px;letter-spacing:-0.3px">Local</div>
<div style="position:absolute;left:0px;top:1400px;width:2560px;height:8px;background:linear-gradient(90deg,#7888a0 0,#90a4bc 50px,#a8c0dc 75px,#a8c0dc 2330px,#8898b0 2450px,#7a8aa0 2545px,#a0a8b8 2546px)"></div>
<div style="position:absolute;left:245px;top:1401px;width:52px;height:7px;background:linear-gradient(#eef3f9,#cbd9e8);border:1px solid #6a82a2;border-bottom:none;border-radius:2px 2px 0 0;box-sizing:border-box"></div>
<div style="position:absolute;left:370px;top:1401px;width:58px;height:7px;background:linear-gradient(#eef3f9,#cbd9e8);border:1px solid #6a82a2;border-bottom:none;border-radius:2px 2px 0 0;box-sizing:border-box"></div>
<div style="position:absolute;left:741px;top:1401px;width:59px;height:7px;background:linear-gradient(#eef3f9,#cbd9e8);border:1px solid #6a82a2;border-bottom:none;border-radius:2px 2px 0 0;box-sizing:border-box"></div>
<div style="position:absolute;left:928px;top:1401px;width:58px;height:7px;background:linear-gradient(#f0c8cc,#d88890);border:1px solid #6a82a2;border-bottom:none;border-radius:2px 2px 0 0;box-sizing:border-box"></div>
<div style="position:absolute;left:990px;top:1401px;width:58px;height:7px;background:linear-gradient(#eef3f9,#cbd9e8);border:1px solid #6a82a2;border-bottom:none;border-radius:2px 2px 0 0;box-sizing:border-box"></div>
<div style="position:absolute;left:1176px;top:1401px;width:58px;height:7px;background:linear-gradient(#eef3f9,#cbd9e8);border:1px solid #6a82a2;border-bottom:none;border-radius:2px 2px 0 0;box-sizing:border-box"></div>
<div style="position:absolute;left:1237px;top:1401px;width:59px;height:7px;background:linear-gradient(#eef3f9,#cbd9e8);border:1px solid #6a82a2;border-bottom:none;border-radius:2px 2px 0 0;box-sizing:border-box"></div>
<div style="position:absolute;left:1300px;top:1401px;width:58px;height:7px;background:linear-gradient(#eef3f9,#cbd9e8);border:1px solid #6a82a2;border-bottom:none;border-radius:2px 2px 0 0;box-sizing:border-box"></div>
<div style="position:absolute;left:1361px;top:1401px;width:59px;height:7px;background:linear-gradient(#eef3f9,#cbd9e8);border:1px solid #6a82a2;border-bottom:none;border-radius:2px 2px 0 0;box-sizing:border-box"></div>
<div style="position:absolute;left:12px;top:1402px;width:30px;height:6px;border-radius:15px 15px 0 0;background:linear-gradient(#c8d4e0,#8ea4bc);border:1px solid #506080;box-sizing:border-box"></div>
<div style="position:absolute;left:73px;top:1403px;width:32px;height:5px;border:1px solid #3a7ab8;border-bottom:none;background:#8ec0f0;box-sizing:border-box"></div>
<div style="position:absolute;left:755px;top:1403px;width:32px;height:5px;background:#c00000"></div>
<div style="position:absolute;left:816px;top:1404px;width:33px;height:4px;background:#00e000"></div>
<div style="position:absolute;left:945px;top:1403px;width:25px;height:5px;border-radius:12px 12px 0 0;background:#e02030"></div>
<div style="position:absolute;left:2545px;top:1400px;width:15px;height:8px;background:#6a7890;border-left:1px solid #333;box-sizing:border-box"></div>
</body></html>
